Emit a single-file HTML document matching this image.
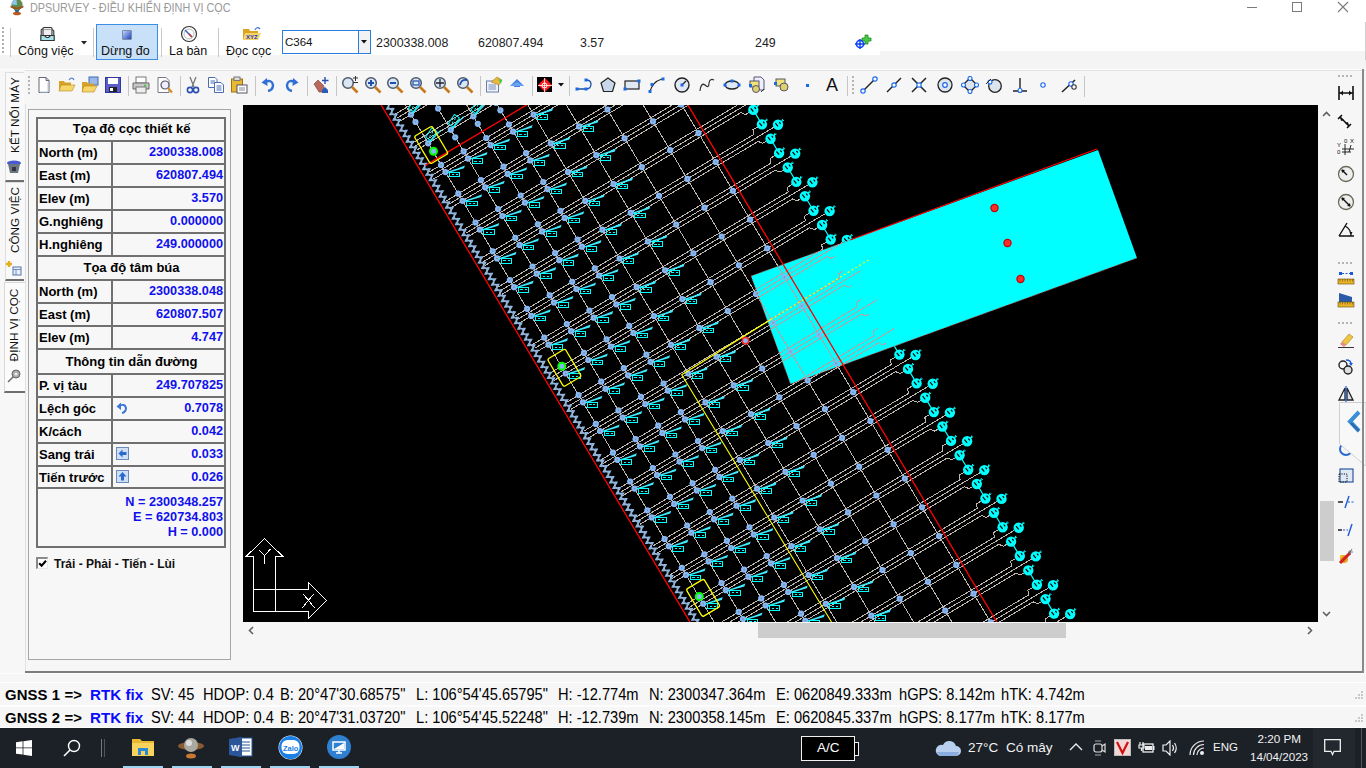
<!DOCTYPE html>
<html><head><meta charset="utf-8">
<style>
html,body{margin:0;padding:0;width:1366px;height:768px;overflow:hidden;background:#f6f6f6;font-family:"Liberation Sans",sans-serif}
.a{position:absolute}
.t{position:absolute;white-space:nowrap}
.b{font-weight:bold}
.sep{position:absolute;width:1px;background:#c9c9c9}
.tb{position:absolute;left:36px;width:190px;border-collapse:collapse}
.cell{position:absolute;box-sizing:border-box}
.lbl{position:absolute;left:39px;font-weight:bold;font-size:13px;color:#000;white-space:nowrap}
.val{position:absolute;right:1143px;font-weight:bold;font-size:12.7px;color:#1010ee;white-space:nowrap;text-align:right}
.hd{position:absolute;left:37px;width:189px;text-align:center;font-weight:bold;font-size:13px;color:#000;white-space:nowrap}
.hl{position:absolute;left:36px;width:190px;background:#666}
.gn{position:absolute;font-size:15px;color:#000;white-space:nowrap}
</style></head><body>
<!-- TITLE BAR -->
<div class="a" style="left:0;top:0;width:1366px;height:22px;background:#fff"></div>
<svg class="a" style="left:9px;top:0" width="16" height="16" viewBox="0 0 16 16">
<ellipse cx="8" cy="13.5" rx="4" ry="1.8" fill="#c05818"/><path d="M4.5 8 L11.5 8 L9.2 12.5 L6.8 12.5Z" fill="#3a5e86"/>
<circle cx="8" cy="4.6" r="5.6" fill="#5e8c4e"/><path d="M2.6 4.6 A5.4 5.4 0 0 1 7.5 -0.8 L8 5 Z" fill="#8cc4f0"/>
<path d="M1.6 5.6 Q8 9.6 14.4 5.6 L14.4 7.4 Q8 10.6 1.6 7.4Z" fill="#a04e1a"/></svg>
<div class="t" style="left:29.5px;top:0px;font-size:13px;line-height:15px;color:#9a9a9a;transform:scaleX(0.833);transform-origin:0 0">DPSURVEY - ĐIỀU KHIỂN ĐỊNH VỊ CỌC</div>
<div class="a" style="left:1247px;top:7px;width:10px;height:1px;background:#7a7a7a"></div>
<div class="a" style="left:1292px;top:2px;width:8px;height:8px;border:1px solid #7a7a7a"></div>
<svg class="a" style="left:1337px;top:1px" width="12" height="12"><path d="M1 1L11 11M11 1L1 11" stroke="#7a7a7a" stroke-width="1.1"/></svg>

<!-- RIBBON ROW 1 -->
<div class="a" style="left:0;top:22px;width:1366px;height:29px;background:#fff"></div><div class="a" style="left:0;top:51px;width:1366px;height:18px;background:#f4f4f4"></div><div class="a" style="left:0;top:51px;width:880px;height:4px;background:#fff"></div>
<div class="a" style="left:0;top:69px;width:1366px;height:1px;background:#fdfdfd"></div><div class="a" style="left:0;top:70px;width:1366px;height:1px;background:#e2e2e2"></div>
<div class="a" style="left:2px;top:27px;width:2px;height:28px;background:repeating-linear-gradient(#b0b0b0 0 2px,transparent 2px 4px)"></div>
<div class="sep" style="left:10px;top:28px;height:29px"></div>
<!-- Cong viec -->
<svg class="a" style="left:40px;top:26px" width="15" height="16" viewBox="0 0 15 16">
<path d="M1.2 9 V4 Q1.2 3 2.2 3 H3 M13.8 9 V5 Q13.8 4 12.8 4 H12" fill="none" stroke="#333" stroke-width="1.1"/>
<rect x="3" y="1.5" width="9" height="8" rx="1" fill="#f0eef4" stroke="#333" stroke-width="1.1"/><path d="M3.5 3.5 H11.5" stroke="#888" stroke-width="0.8"/>
<path d="M0.8 9.5 H4.5 L6.5 11.5 H8.5 L10.5 9.5 H14.2 V14.5 H0.8Z" fill="#a6e2ea" stroke="#333" stroke-width="1.2"/></svg>
<div class="t" style="left:18px;top:43.5px;font-size:12.5px;color:#111">Công việc</div>
<svg class="a" style="left:80.5px;top:40.5px" width="7" height="4"><path d="M0 0H6L3 3.5Z" fill="#222"/></svg>
<div class="sep" style="left:93px;top:28px;height:29px"></div>
<!-- Dung do -->
<div class="a" style="left:96px;top:24px;width:60px;height:34px;background:#c8e0f8;border:1px solid #3a8ee6"></div>
<div class="a" style="left:122.5px;top:30.5px;width:8px;height:8px;background:linear-gradient(135deg,#bcd4ff,#2244bb);box-shadow:0 0 0 0.5px #335"></div>
<div class="t" style="left:101px;top:43.5px;font-size:12.5px;color:#111">Dừng đo</div>
<div class="sep" style="left:161px;top:28px;height:29px"></div>
<!-- La ban -->
<svg class="a" style="left:180px;top:25px" width="18" height="18" viewBox="0 0 18 18">
<circle cx="9" cy="9" r="7.5" fill="#fff" stroke="#333" stroke-width="1.2"/><circle cx="9" cy="9" r="5" fill="none" stroke="#bbb"/>
<path d="M5 5 L12 12" stroke="#3366cc" stroke-width="1.5"/><path d="M9 9 L12 12" stroke="#dd3333" stroke-width="1.5"/></svg>
<div class="t" style="left:169px;top:43.5px;font-size:12.5px;color:#111">La bàn</div>
<div class="sep" style="left:218px;top:28px;height:29px"></div>
<!-- Doc coc -->
<svg class="a" style="left:242px;top:26px" width="20" height="15" viewBox="0 0 20 15">
<path d="M1 3 H7 L8 5 H16 V14 H1 Z" fill="#d9a520"/><path d="M3 7 H19 L16 14 H1 Z" fill="#f5d46a"/>
<text x="4" y="13" font-size="6" font-weight="bold" fill="#2233cc" font-family="Liberation Sans">XYZ</text>
<path d="M13 4 Q15 0 18 3" fill="none" stroke="#3a6fd0" stroke-width="1.2"/></svg>
<div class="t" style="left:226px;top:43.5px;font-size:12.5px;color:#111">Đọc cọc</div>
<!-- combo -->
<div class="a" style="left:282px;top:30px;width:87px;height:22px;background:#fff;border:1px solid #2a7ee0"></div>
<div class="a" style="left:358px;top:31px;width:11px;height:22px;background:#f2f2f2;border-left:1px solid #2a7ee0"></div>
<svg class="a" style="left:361px;top:40px" width="7" height="4"><path d="M0 0H6L3 3.5Z" fill="#111"/></svg>
<div class="t" style="left:285px;top:35.5px;font-size:11.5px;color:#111">C364</div>
<div class="t" style="left:376px;top:36px;font-size:12.4px;color:#222">2300338.008</div>
<div class="t" style="left:478px;top:36px;font-size:12.4px;color:#222">620807.494</div>
<div class="t" style="left:580px;top:36px;font-size:12.4px;color:#222">3.57</div>
<div class="t" style="left:755px;top:36px;font-size:12.4px;color:#222">249</div>
<svg class="a" style="left:854px;top:34px" width="18" height="16" viewBox="0 0 18 16">
<path d="M11 1 H14 V4 H17 V7 H14 V10 H11 V7 H8 V4 H11 Z" fill="#4c4" stroke="#282" stroke-width="0.8"/>
<circle cx="6" cy="10" r="3.6" fill="none" stroke="#1144ee" stroke-width="1.6"/><circle cx="6" cy="10" r="1.2" fill="#1144ee"/>
<path d="M6 5 V15 M1 10 H11" stroke="#1144ee" stroke-width="1.3"/></svg>

<!-- TOOLBAR ROW 2 -->
<div class="a" style="left:0;top:71px;width:1366px;height:34px;background:#f6f6f6"></div>
<div class="a" style="left:28px;top:76px;width:2px;height:19px;background:repeating-linear-gradient(#b4b4b4 0 2px,transparent 2px 4px)"></div>
<svg class="a" style="left:34.7px;top:76.0px" width="18" height="18" viewBox="0 0 18 18"><path d="M4 1.5H11L14 4.5V16.5H4Z" fill="#fff" stroke="#667"/><path d="M11 1.5V4.5H14" fill="none" stroke="#667"/><path d="M5 16 H13 V6" stroke="#b8c8e0" fill="none"/></svg>
<svg class="a" style="left:57.7px;top:76.0px" width="18" height="18" viewBox="0 0 18 18"><path d="M1 5H6L7 6.5H13V15H1Z" fill="#d6a228"/><path d="M3 9H17L14 15H1Z" fill="#f6d66a" stroke="#b98a20" stroke-width="0.6"/><path d="M11 4 Q14 0 16 4" fill="none" stroke="#4a78c8" stroke-width="1.2"/></svg>
<svg class="a" style="left:81.0px;top:76.0px" width="18" height="18" viewBox="0 0 18 18"><rect x="8" y="1" width="9" height="8" fill="#9ab8e8" stroke="#4468b0"/><path d="M1 6H6L7 7.5H13V16H1Z" fill="#d6a228"/><path d="M3 10H16L13 16H1Z" fill="#f6d66a" stroke="#b98a20" stroke-width="0.6"/></svg>
<svg class="a" style="left:103.8px;top:76.0px" width="18" height="18" viewBox="0 0 18 18"><rect x="1.5" y="1.5" width="15" height="15" fill="#5a5ec8" stroke="#33379a"/><rect x="4" y="2" width="10" height="6" fill="#fff"/><rect x="5" y="11" width="8" height="5" fill="#222"/><rect x="6" y="12" width="3" height="3" fill="#fff"/></svg>
<div class="a" style="left:128px;top:76px;width:1px;height:20px;background:#c6c6c6"></div>
<svg class="a" style="left:132.4px;top:76.0px" width="18" height="18" viewBox="0 0 18 18"><rect x="4" y="1" width="10" height="6" fill="#fff" stroke="#777"/><path d="M1 7H17V13H1Z" fill="#c8c8c8" stroke="#666"/><rect x="4" y="11" width="10" height="6" fill="#eee" stroke="#777"/><circle cx="13" cy="9.5" r="1" fill="#2c2"/></svg>
<svg class="a" style="left:156.0px;top:76.0px" width="18" height="18" viewBox="0 0 18 18"><path d="M2 1.5H10L13 4.5V16.5H2Z" fill="#fff" stroke="#778"/><circle cx="9" cy="9" r="4" fill="#eef" stroke="#556" stroke-width="1.2"/><path d="M12 12L16 16.5" stroke="#d98a20" stroke-width="2"/></svg>
<div class="a" style="left:180px;top:76px;width:1px;height:20px;background:#c6c6c6"></div>
<svg class="a" style="left:184.0px;top:76.0px" width="18" height="18" viewBox="0 0 18 18"><path d="M6 1L10 11M12 1L8 11" stroke="#777" stroke-width="1.3"/><circle cx="6" cy="14" r="2.6" fill="none" stroke="#2a50b0" stroke-width="1.6"/><circle cx="12" cy="14" r="2.6" fill="none" stroke="#2a50b0" stroke-width="1.6"/></svg>
<svg class="a" style="left:206.9px;top:76.0px" width="18" height="18" viewBox="0 0 18 18"><path d="M1.5 1.5H8L10 3.5V11.5H1.5Z" fill="#fff" stroke="#4a6cb0"/><path d="M7.5 6.5H14L16.5 9V16.5H7.5Z" fill="#fff" stroke="#4a6cb0"/><path d="M9.5 10H14.5M9.5 12H14.5M9.5 14H14.5M3.5 5H8M3.5 7H8" stroke="#4a6cb0"/></svg>
<svg class="a" style="left:230.3px;top:76.0px" width="18" height="18" viewBox="0 0 18 18"><rect x="1.5" y="3" width="11" height="13" fill="#e8b830" stroke="#a07010"/><rect x="4" y="1" width="6" height="3.5" fill="#ddd" stroke="#777"/><rect x="7" y="9" width="10" height="8" fill="#fff" stroke="#556"/><path d="M9 12H15M9 14H15" stroke="#889"/></svg>
<div class="a" style="left:255px;top:76px;width:1px;height:20px;background:#c6c6c6"></div>
<svg class="a" style="left:259.6px;top:76.0px" width="18" height="18" viewBox="0 0 18 18"><path d="M5 6 Q12 3 13 9 Q13 14 8 15" fill="none" stroke="#2f6fd6" stroke-width="2.4"/><path d="M1.5 6.5 L7 2 L7.5 10Z" fill="#2f6fd6"/></svg>
<svg class="a" style="left:282.3px;top:76.0px" width="18" height="18" viewBox="0 0 18 18"><path d="M13 6 Q6 3 5 9 Q5 14 10 15" fill="none" stroke="#2f6fd6" stroke-width="2.4"/><path d="M16.5 6.5 L11 2 L10.5 10Z" fill="#2f6fd6"/></svg>
<div class="a" style="left:307px;top:76px;width:1px;height:20px;background:#c6c6c6"></div>
<svg class="a" style="left:312.2px;top:76.0px" width="18" height="18" viewBox="0 0 18 18"><path d="M2 8 L6 4 L12 10 L11 16 H7Z" fill="#b86a5a" stroke="#7a3a30" stroke-width="0.6"/><path d="M13 1V8M10 4.5H16.5" stroke="#2a4fb0" stroke-width="1.4"/><path d="M10 14 L13 11 L16 14 V17 H10Z" fill="#2a5cb8"/></svg>
<div class="a" style="left:336px;top:76px;width:1px;height:20px;background:#c6c6c6"></div>
<svg class="a" style="left:340.5px;top:76.0px" width="18" height="18" viewBox="0 0 18 18"><circle cx="7" cy="7" r="5.3" fill="#dbe6f5" stroke="#4d5a6a" stroke-width="1.5"/><path d="M11 11L16.5 16.5" stroke="#c9781c" stroke-width="2.6"/><path d="M12 2H17M14.5 0V5M12 6.5H17" stroke="#333" stroke-width="1"/></svg>
<svg class="a" style="left:363.5px;top:76.0px" width="18" height="18" viewBox="0 0 18 18"><circle cx="7" cy="7" r="5.3" fill="#dbe6f5" stroke="#4d5a6a" stroke-width="1.5"/><path d="M11 11L16.5 16.5" stroke="#c9781c" stroke-width="2.6"/><path d="M4 7H10M7 4V10" stroke="#1c4fb0" stroke-width="2"/></svg>
<svg class="a" style="left:386.4px;top:76.0px" width="18" height="18" viewBox="0 0 18 18"><circle cx="7" cy="7" r="5.3" fill="#dbe6f5" stroke="#4d5a6a" stroke-width="1.5"/><path d="M11 11L16.5 16.5" stroke="#c9781c" stroke-width="2.6"/><path d="M4 7H10" stroke="#1c4fb0" stroke-width="2"/></svg>
<svg class="a" style="left:409.1px;top:76.0px" width="18" height="18" viewBox="0 0 18 18"><circle cx="7" cy="7" r="5.3" fill="#dbe6f5" stroke="#4d5a6a" stroke-width="1.5"/><path d="M11 11L16.5 16.5" stroke="#c9781c" stroke-width="2.6"/><rect x="4" y="5" width="6" height="4" fill="none" stroke="#1c4fb0" stroke-width="1.2"/></svg>
<svg class="a" style="left:432.6px;top:76.0px" width="18" height="18" viewBox="0 0 18 18"><circle cx="7" cy="7" r="5.3" fill="#dbe6f5" stroke="#4d5a6a" stroke-width="1.5"/><path d="M11 11L16.5 16.5" stroke="#c9781c" stroke-width="2.6"/><path d="M7 3V11M3 7H11" stroke="#223" stroke-width="1.3"/></svg>
<svg class="a" style="left:456.0px;top:76.0px" width="18" height="18" viewBox="0 0 18 18"><circle cx="7" cy="7" r="5.3" fill="#dbe6f5" stroke="#4d5a6a" stroke-width="1.5"/><path d="M11 11L16.5 16.5" stroke="#c9781c" stroke-width="2.6"/><path d="M4 9 Q5 3 11 4" fill="none" stroke="#1c4fb0" stroke-width="1.8"/></svg>
<div class="a" style="left:480px;top:76px;width:1px;height:20px;background:#c6c6c6"></div>
<svg class="a" style="left:485.2px;top:76.0px" width="18" height="18" viewBox="0 0 18 18"><rect x="1.5" y="5" width="12" height="11" fill="#eef2fa" stroke="#6a7fa8"/><path d="M3.5 9H11M3.5 11H11M3.5 13H11" stroke="#7a8fb8"/><path d="M6 6 L12 1 L17 4 L14 9Z" fill="#e6b840" stroke="#9a7010" stroke-width="0.5"/><path d="M13 3 L17 4 L16 8Z" fill="#4c4"/></svg>
<svg class="a" style="left:507.5px;top:76.0px" width="18" height="18" viewBox="0 0 18 18"><path d="M9 3 L16 10 H12 V11 H6 V10 H2Z" fill="#3e7fe0"/><path d="M2 10 H16 L9 6Z" fill="#6aa4f0"/></svg>
<div class="a" style="left:532px;top:76px;width:1px;height:20px;background:#c6c6c6"></div>
<div class="a" style="left:537px;top:77px;width:15px;height:15px;background:#000"></div>
<svg class="a" style="left:536.6px;top:76.5px" width="16" height="16" viewBox="0 0 16 16"><path d="M8 1 L15 8 L8 15 L1 8Z" fill="#ff1a1a"/><circle cx="7.5" cy="8.5" r="2.5" fill="none" stroke="#fff" stroke-width="1"/><path d="M1 8.5H15M7.5 1V15" stroke="#fff" stroke-width="0.8"/></svg>
<svg class="a" style="left:558px;top:83px" width="7" height="4"><path d="M0 0H6L3 3.5Z" fill="#111"/></svg>
<div class="a" style="left:569px;top:76px;width:1px;height:20px;background:#c6c6c6"></div>
<svg class="a" style="left:575.0px;top:76.0px" width="18" height="18" viewBox="0 0 18 18"><path d="M2 13 H11 Q16 13 16 8 Q16 4 11 4" fill="none" stroke="#1a4fa8" stroke-width="1.3"/><rect x="0.5" y="11.5" width="3" height="3" fill="#1a6ae8"/><rect x="9.5" y="11.5" width="3" height="3" fill="#1a6ae8"/><rect x="9.5" y="2.5" width="3" height="3" fill="#1a6ae8"/></svg>
<svg class="a" style="left:598.8px;top:76.0px" width="18" height="18" viewBox="0 0 18 18"><path d="M9 2 L16 7 L13.5 15.5 H4.5 L2 7Z" fill="#c8d8ea" stroke="#222" stroke-width="1.2"/></svg>
<svg class="a" style="left:623.0px;top:76.0px" width="18" height="18" viewBox="0 0 18 18"><rect x="2" y="5" width="14" height="8" fill="#e0e8f4" stroke="#222" stroke-width="1.2"/><rect x="0.5" y="11.5" width="3" height="3" fill="#1a6ae8"/><rect x="14.5" y="3.5" width="3" height="3" fill="#1a6ae8"/></svg>
<svg class="a" style="left:647.9px;top:76.0px" width="18" height="18" viewBox="0 0 18 18"><path d="M2 16 Q4 6 14 3" fill="none" stroke="#222" stroke-width="1.3"/><rect x="0.5" y="14" width="3" height="3" fill="#1a6ae8"/><rect x="2.5" y="7" width="3" height="3" fill="#1a6ae8"/><rect x="13.5" y="1.5" width="3" height="3" fill="#1a6ae8"/></svg>
<svg class="a" style="left:673.2px;top:76.0px" width="18" height="18" viewBox="0 0 18 18"><circle cx="9" cy="9" r="7" fill="#e0e8f4" stroke="#222" stroke-width="1.4"/><path d="M9 9 L13 5" stroke="#222" stroke-width="1.2"/><rect x="7.5" y="7.5" width="3" height="3" fill="#1a6ae8"/></svg>
<svg class="a" style="left:697.7px;top:76.0px" width="18" height="18" viewBox="0 0 18 18"><path d="M2 15 Q3 6 7 9 Q11 13 11 7 Q12 2 16 4" fill="none" stroke="#333" stroke-width="1.2"/></svg>
<svg class="a" style="left:723.0px;top:76.0px" width="18" height="18" viewBox="0 0 18 18"><ellipse cx="9" cy="9" rx="7" ry="4" fill="#e0e8f4" stroke="#222" stroke-width="1.3"/><rect x="7.5" y="3.5" width="3" height="3" fill="#1a6ae8"/><rect x="0.5" y="7.5" width="3" height="3" fill="#1a6ae8"/><rect x="14.5" y="7.5" width="3" height="3" fill="#1a6ae8"/></svg>
<svg class="a" style="left:748.0px;top:76.0px" width="18" height="18" viewBox="0 0 18 18"><path d="M6 1H13L16 4V14H6Z" fill="#eef" stroke="#557"/><rect x="2" y="5" width="9" height="6" fill="#f2e27a" stroke="#556"/><circle cx="8" cy="13" r="3.5" fill="#dfd070" stroke="#556"/><rect x="1" y="8" width="3" height="3" fill="#1a6ae8"/><path d="M13 16L16 13" stroke="#333"/></svg>
<svg class="a" style="left:772.7px;top:76.0px" width="18" height="18" viewBox="0 0 18 18"><rect x="3" y="3" width="9" height="7" fill="#f2e27a" stroke="#556"/><circle cx="11" cy="11" r="4" fill="#dfd070" stroke="#556"/><rect x="1" y="6" width="3" height="3" fill="#1a6ae8"/></svg>
<div class="a" style="left:805.5px;top:83.5px;width:3px;height:3px;background:#1a6ae8"></div>
<div class="t" style="left:826px;top:75px;font-size:18px;color:#111">A</div>
<div class="a" style="left:847px;top:76px;width:1px;height:20px;background:#c6c6c6"></div>
<div class="a" style="left:852px;top:76px;width:2px;height:19px;background:repeating-linear-gradient(#b4b4b4 0 2px,transparent 2px 4px)"></div>
<svg class="a" style="left:860.0px;top:76.0px" width="18" height="18" viewBox="0 0 18 18"><path d="M3 15 L15 3" stroke="#222" stroke-width="1.4"/><circle cx="3" cy="15" r="2.2" fill="#fff" stroke="#1a6ae8" stroke-width="1.2"/><circle cx="15" cy="3" r="2.2" fill="#fff" stroke="#1a6ae8" stroke-width="1.2"/></svg>
<svg class="a" style="left:885.0px;top:76.0px" width="18" height="18" viewBox="0 0 18 18"><path d="M2 16 L16 2" stroke="#222" stroke-width="1.4"/><circle cx="9" cy="9" r="2.2" fill="#fff" stroke="#1a6ae8" stroke-width="1.2"/></svg>
<svg class="a" style="left:910.0px;top:76.0px" width="18" height="18" viewBox="0 0 18 18"><path d="M2 2 L16 16 M16 2 L2 16" stroke="#222" stroke-width="1.5"/><rect x="7" y="7" width="4" height="4" fill="#fff" stroke="#1a6ae8" stroke-width="1.2"/></svg>
<svg class="a" style="left:935.5px;top:76.0px" width="18" height="18" viewBox="0 0 18 18"><circle cx="9" cy="9" r="7" fill="#dde4ee" stroke="#222" stroke-width="1.3"/><circle cx="9" cy="9" r="2.3" fill="#fff" stroke="#1a6ae8" stroke-width="1.2"/></svg>
<svg class="a" style="left:960.5px;top:76.0px" width="18" height="18" viewBox="0 0 18 18"><path d="M9 2 L16 9 L9 16 L2 9Z" fill="#dde4ee" stroke="#222" stroke-width="1.3"/><g fill="#fff" stroke="#1a6ae8" stroke-width="1.1"><circle cx="9" cy="2.5" r="2"/><circle cx="15.5" cy="9" r="2"/><circle cx="9" cy="15.5" r="2"/><circle cx="2.5" cy="9" r="2"/></g></svg>
<svg class="a" style="left:985.4px;top:76.0px" width="18" height="18" viewBox="0 0 18 18"><circle cx="10" cy="10" r="6.3" fill="#dde4ee" stroke="#222" stroke-width="1.3"/><circle cx="5" cy="6" r="2" fill="#fff" stroke="#1a6ae8" stroke-width="1.1"/><path d="M1 8 L6 3" stroke="#222"/></svg>
<svg class="a" style="left:1010.6px;top:76.0px" width="18" height="18" viewBox="0 0 18 18"><path d="M9 2V15M2 15H16" stroke="#222" stroke-width="1.4"/><circle cx="9" cy="14.5" r="2" fill="#fff" stroke="#1a6ae8" stroke-width="1.1"/></svg>
<svg class="a" style="left:1034.3px;top:76.0px" width="18" height="18" viewBox="0 0 18 18"><circle cx="9" cy="9" r="2.2" fill="#fff" stroke="#1a6ae8" stroke-width="1.1"/></svg>
<svg class="a" style="left:1060.4px;top:76.0px" width="18" height="18" viewBox="0 0 18 18"><path d="M2 16 L15 4" stroke="#222" stroke-width="1.5"/><circle cx="11" cy="8" r="2.2" fill="#fff" stroke="#1a6ae8" stroke-width="1.1"/><circle cx="14" cy="11" r="2.2" fill="#fff" stroke="#333" stroke-width="1.1"/></svg>
<div class="a" style="left:1084px;top:76px;width:1px;height:21px;background:#c6c6c6"></div>

<!-- LEFT TABS -->
<div class="a" style="left:0;top:70px;width:25px;height:602px;background:#f7f7f7"></div>
<div class="a" style="left:5px;top:72px;width:18px;height:107px;background:#f9f9f9;border:1px solid #dedede;border-right:none;border-bottom:2px solid #6e6e6e"></div>
<div class="t" style="left:14.5px;top:115px;transform:translate(-50%,-50%) rotate(-90deg);font-size:11.8px;color:#111">KẾT NỐI MÁY</div>
<svg class="a" style="left:6px;top:159px" width="16" height="16"><ellipse cx="8" cy="4" rx="7" ry="2.5" fill="#4a5ad0"/><path d="M2 5 H14 L12 14 H4Z" fill="#6a7680"/><rect x="6" y="8" width="4" height="4" fill="#334"/></svg>
<div class="a" style="left:5px;top:182px;width:18px;height:96px;background:#f9f9f9;border:1px solid #dedede;border-right:none;border-bottom:2px solid #6e6e6e"></div>
<div class="t" style="left:14.5px;top:219.5px;transform:translate(-50%,-50%) rotate(-90deg);font-size:11.8px;color:#111">CÔNG VIỆC</div>
<svg class="a" style="left:6px;top:260px" width="16" height="16"><rect x="7" y="7" width="8" height="8" fill="#e8f0ff" stroke="#5577aa"/><path d="M7 9.5H15M10 9.5V15" stroke="#5577aa" stroke-width="0.8"/><path d="M3 1V7M0 4H6" stroke="#e0b020" stroke-width="2.4"/></svg>
<div class="a" style="left:4px;top:282px;width:21px;height:108px;background:#fbfbfb;border:1px solid #d8d8d8;border-right:none;border-bottom:2px solid #6e6e6e"></div>
<div class="t" style="left:14px;top:325px;transform:translate(-50%,-50%) rotate(-90deg);font-size:11.8px;color:#111">ĐỊNH VỊ CỌC</div>
<svg class="a" style="left:6px;top:368px" width="16" height="16"><circle cx="10" cy="6" r="4" fill="#aaa" stroke="#666"/><path d="M7 9 L2 14" stroke="#666" stroke-width="1.5"/><circle cx="10" cy="6" r="1.5" fill="#eee"/></svg>

<!-- PANEL -->
<div class="a" style="left:25px;top:104px;width:1px;height:568px;background:#e2e2e2"></div>
<div class="a" style="left:28px;top:109px;width:203px;height:551px;border:1px solid #a6a6a6;box-sizing:border-box;background:#f7f7f7"></div>
<div class="a" style="left:36px;top:117px;width:190px;height:431px;border:2px solid #707070;box-sizing:border-box"></div>
<div class="a" style="left:36px;top:140px;width:190px;height:2px;background:#707070"></div>
<div class="a" style="left:36px;top:163px;width:190px;height:2px;background:#707070"></div>
<div class="a" style="left:36px;top:186px;width:190px;height:2px;background:#707070"></div>
<div class="a" style="left:36px;top:209px;width:190px;height:2px;background:#707070"></div>
<div class="a" style="left:36px;top:232px;width:190px;height:2px;background:#707070"></div>
<div class="a" style="left:36px;top:255px;width:190px;height:2px;background:#707070"></div>
<div class="a" style="left:36px;top:279px;width:190px;height:2px;background:#707070"></div>
<div class="a" style="left:36px;top:302px;width:190px;height:2px;background:#707070"></div>
<div class="a" style="left:36px;top:325px;width:190px;height:2px;background:#707070"></div>
<div class="a" style="left:36px;top:348px;width:190px;height:2px;background:#707070"></div>
<div class="a" style="left:36px;top:373px;width:190px;height:2px;background:#707070"></div>
<div class="a" style="left:36px;top:396px;width:190px;height:2px;background:#707070"></div>
<div class="a" style="left:36px;top:419px;width:190px;height:2px;background:#707070"></div>
<div class="a" style="left:36px;top:442px;width:190px;height:2px;background:#707070"></div>
<div class="a" style="left:36px;top:465px;width:190px;height:2px;background:#707070"></div>
<div class="a" style="left:36px;top:487px;width:190px;height:2px;background:#707070"></div>
<div class="a" style="left:111px;top:140px;width:2px;height:116px;background:#707070"></div>
<div class="a" style="left:111px;top:279px;width:2px;height:70px;background:#707070"></div>
<div class="a" style="left:111px;top:373px;width:2px;height:116px;background:#707070"></div>
<div class="hd" style="top:118px;height:22px;line-height:22px">Tọa độ cọc thiết kế</div>
<div class="hd" style="top:256px;height:23px;line-height:23px">Tọa độ tâm búa</div>
<div class="hd" style="top:350px;height:23px;line-height:23px">Thông tin dẫn đường</div>
<div class="lbl" style="top:141px;height:22px;line-height:23px">North (m)</div>
<div class="val" style="top:141px;height:22px;line-height:23px;right:1143px">2300338.008</div>
<div class="lbl" style="top:164px;height:22px;line-height:23px">East (m)</div>
<div class="val" style="top:164px;height:22px;line-height:23px;right:1143px">620807.494</div>
<div class="lbl" style="top:187px;height:22px;line-height:23px">Elev (m)</div>
<div class="val" style="top:187px;height:22px;line-height:23px;right:1143px">3.570</div>
<div class="lbl" style="top:210px;height:22px;line-height:23px">G.nghiêng</div>
<div class="val" style="top:210px;height:22px;line-height:23px;right:1143px">0.000000</div>
<div class="lbl" style="top:233px;height:22px;line-height:23px">H.nghiêng</div>
<div class="val" style="top:233px;height:22px;line-height:23px;right:1143px">249.000000</div>
<div class="lbl" style="top:280px;height:22px;line-height:23px">North (m)</div>
<div class="val" style="top:280px;height:22px;line-height:23px;right:1143px">2300338.048</div>
<div class="lbl" style="top:303px;height:22px;line-height:23px">East (m)</div>
<div class="val" style="top:303px;height:22px;line-height:23px;right:1143px">620807.507</div>
<div class="lbl" style="top:326px;height:22px;line-height:23px">Elev (m)</div>
<div class="val" style="top:326px;height:22px;line-height:23px;right:1143px">4.747</div>
<div class="lbl" style="top:374px;height:22px;line-height:23px">P. vị tàu</div>
<div class="val" style="top:374px;height:22px;line-height:23px;right:1143px">249.707825</div>
<div class="lbl" style="top:397px;height:22px;line-height:23px">Lệch góc</div>
<div class="val" style="top:397px;height:22px;line-height:23px;right:1143px">0.7078</div>
<div class="lbl" style="top:420px;height:22px;line-height:23px">K/cách</div>
<div class="val" style="top:420px;height:22px;line-height:23px;right:1143px">0.042</div>
<div class="lbl" style="top:443px;height:22px;line-height:23px">Sang trái</div>
<div class="val" style="top:443px;height:22px;line-height:23px;right:1143px">0.033</div>
<div class="lbl" style="top:466px;height:22px;line-height:23px">Tiến trước</div>
<div class="val" style="top:466px;height:22px;line-height:23px;right:1143px">0.026</div>
<svg class="a" style="left:116px;top:402px" width="13" height="12"><path d="M3 4 Q9 1 10 6 Q10 10 6 11" fill="none" stroke="#3a78d8" stroke-width="2"/><path d="M0.5 4.5 L5 0.5 L5 8Z" fill="#3a78d8"/></svg>
<svg class="a" style="left:116px;top:447px" width="13" height="13"><rect x="0.5" y="0.5" width="12" height="12" fill="#cfe0f5" stroke="#6a8ab8"/><path d="M2.5 6.5 L6.5 2.5 V5 H10.5 V8 H6.5 V10.5Z" fill="#2a6ad0"/></svg>
<svg class="a" style="left:116px;top:470px" width="13" height="13"><rect x="0.5" y="0.5" width="12" height="12" fill="#cfe0f5" stroke="#6a8ab8"/><path d="M6.5 2 L10.5 6.5 H8 V10.5 H5 V6.5 H2.5Z" fill="#2a6ad0"/></svg>
<div class="val" style="top:495px;line-height:15px;right:1143px">N = 2300348.257</div>
<div class="val" style="top:510px;line-height:15px;right:1143px">E = 620734.803</div>
<div class="val" style="top:525px;line-height:15px;right:1143px">H = 0.000</div>
<div class="a" style="left:36px;top:557px;width:12px;height:12px;border-top:2px solid #8a8a8a;border-left:2px solid #8a8a8a;border-right:1px solid #e8e8e8;border-bottom:1px solid #e8e8e8;box-sizing:border-box;background:#fff"></div>
<svg class="a" style="left:38px;top:559px" width="9" height="9"><path d="M1.2 4.2 L3.6 6.8 L8 1.8" fill="none" stroke="#000" stroke-width="2.1"/></svg>
<div class="t b" style="left:54px;top:557px;font-size:12px;color:#111">Trái - Phải - Tiến - Lùi</div>

<!-- CANVAS -->
<svg class="a" style="left:243px;top:105px" width="1075" height="517" viewBox="243 105 1075 517">
<defs><clipPath id="cy"><path d="M751 276 L1098 150 L1137 258 L790.5 384 Z"/></clipPath>
<g id="fish"><circle r="5.2" fill="#00ffff"/><path d="M-2.6 -1.6 L0 1.6 M1.2 -2.8 L2.6 -1" stroke="#000" stroke-width="1.2"/><path d="M3 -3.2 L6 -4.6 M3.5 -2.6 L4.6 -5.8" stroke="#00ffff" stroke-width="1"/></g>
<g id="dot"><circle r="3.1" fill="#84b8f8"/><circle r="0.8" fill="#8a8a80"/></g>
<g id="lab"><path d="M2 -0.3 L12 -3.6 L19.5 -6.6 L18.6 -3.8 L2.5 0.9Z" fill="#40ecff"/><path d="M4.2 0.2 h10.2 v4.6 h-10.2z M6.4 2.5 h2.2 M10.5 2.5 h2" fill="none" stroke="#00ffff" stroke-width="1" shape-rendering="crispEdges"/></g>
<g id="lab2"><path d="M1 -1 L12.8 -13.2" stroke="#40ecff" stroke-width="1.3"/><g transform="translate(3 -9) rotate(-56)"><path d="M-5.5 -3 h11 v6 h-11z M-3 0 h2 M1 0 h2" fill="none" stroke="#00ffff" stroke-width="1"/></g></g>
<path id="gp" d="M544.8 -124.2L1057.6 734.4M516.4 -107.2L1029.2 751.3M488.1 -90.3L1000.9 768.2M459.8 -73.4L972.6 785.1M431.4 -56.5L944.2 802M408.9 -43L921.7 815.5M386.3 -29.5L899.1 829M363.7 -16L876.5 842.5M341.1 -2.5L853.9 856M309 -29.4L558.8 -178.7M311.1 -25.8L560.9 -175.1M313.2 -22.3L563.1 -171.5M326.2 -0.7L576 -149.9M328.3 2.9L578.1 -146.3M330.4 6.5L580.2 -142.8M343.3 28.1L593.2 -121.1M345.5 31.7L595.3 -117.5M347.6 35.2L597.4 -114M360.5 56.9L610.4 -92.3M362.7 60.5L612.5 -88.7M364.8 64L614.6 -85.2M377.7 85.7L627.6 -63.6M379.9 89.3L629.7 -59.9M382 92.8L631.8 -56.4M394.9 114.4L644.7 -34.8M397.1 118.1L646.9 -31.2M399.2 121.6L649 -27.7M412.1 143.2L661.9 -6M414.3 146.8L664.1 -2.4M416.4 150.3L666.2 1.1M429.3 172L679.1 22.8M431.4 175.6L681.3 26.4M433.5 179.1L683.4 29.9M446.5 200.8L696.3 51.6M448.6 204.4L698.5 55.2M450.7 207.9L700.6 58.7M463.7 229.6L713.5 80.3M465.8 233.2L715.6 83.9M467.9 236.7L717.8 87.5M480.9 258.3L730.7 109.1M483 261.9L732.8 112.7M485.1 265.5L734.9 116.2M498 287.1L747.9 137.9M500.2 290.7L750 141.5M502.3 294.2L752.1 145M515.2 315.9L765.1 166.7M517.4 319.5L767.2 170.3M519.5 323L769.3 173.8M532.4 344.7L782.3 195.4M534.6 348.3L784.4 199M536.7 351.8L786.5 202.6M549.6 373.4L799.4 224.2M551.8 377L801.6 227.8M553.9 380.6L803.7 231.3M566.8 402.2L816.6 253M569 405.8L818.8 256.6M571.1 409.3L820.9 260.1M584 431L833.8 281.8M586.1 434.6L836 285.4M588.2 438.1L838.1 288.9M601.2 459.8L851 310.6M603.3 463.4L853.2 314.2M605.4 466.9L855.3 317.7M618.4 488.6L868.2 339.3M620.5 492.2L870.3 342.9M622.6 495.7L872.5 346.5M635.6 517.3L885.4 368.1M637.7 520.9L887.5 371.7M639.8 524.5L889.6 375.2M652.7 546.1L902.6 396.9M654.9 549.7L904.7 400.5M657 553.2L906.8 404M669.9 574.9L919.8 425.7M672.1 578.5L921.9 429.3M674.2 582L924 432.8M687.1 603.7L936.9 454.4M689.3 607.3L939.1 458M691.4 610.8L941.2 461.6M704.3 632.4L954.1 483.2M706.5 636L956.3 486.8M708.6 639.6L958.4 490.3M721.5 661.2L971.3 512M723.7 664.8L973.5 515.6M725.8 668.3L975.6 519.1M738.7 690L988.5 540.8M740.8 693.6L990.7 544.4M742.9 697.1L992.8 547.9M755.9 718.8L1005.7 569.5M758 722.4L1007.9 573.2M760.1 725.9L1010 576.7M773.1 747.5L1022.9 598.3M775.2 751.2L1025 601.9M777.3 754.7L1027.1 605.5M790.3 776.3L1040.1 627.1M792.4 779.9L1042.2 630.7M794.5 783.5L1044.3 634.2M807.4 805.1L1057.3 655.9M809.6 808.7L1059.4 659.5M811.7 812.2L1061.5 663M558.8 -178.7L564.8 -182.3L563.8 -186.8L568.6 -189.6M560.9 -175.1L584.6 -189.2M563.1 -171.5L569.1 -175.1L573.7 -173.2L577.1 -175.3M576 -149.9L582 -153.5L581 -158L585.7 -160.8M578.1 -146.3L601.7 -160.4M580.2 -142.8L586.3 -146.3L590.9 -144.5L594.3 -146.5M593.2 -121.1L599.2 -124.7L598.2 -129.2L602.9 -132.1M595.3 -117.5L618.9 -131.6M597.4 -114L603.4 -117.6L608.1 -115.7L611.5 -117.7M610.4 -92.3L616.4 -95.9L615.4 -100.5L620.1 -103.3M612.5 -88.7L636.1 -102.8M614.6 -85.2L620.6 -88.8L625.3 -86.9L628.7 -88.9M627.6 -63.6L633.6 -67.1L632.6 -71.7L637.3 -74.5M629.7 -59.9L653.3 -74M631.8 -56.4L637.8 -60L642.4 -58.1L645.9 -60.2M644.7 -34.8L650.7 -38.4L649.8 -42.9L654.5 -45.7M646.9 -31.2L670.5 -45.3M649 -27.7L655 -31.2L659.6 -29.3L663.1 -31.4M661.9 -6L667.9 -9.6L667 -14.1L671.7 -17M664.1 -2.4L687.7 -16.5M666.2 1.1L672.2 -2.5L676.8 -0.6L680.3 -2.6M679.1 22.8L685.1 19.2L684.2 14.6L688.9 11.8M681.3 26.4L704.9 12.3M683.4 29.9L689.4 26.3L694 28.2L697.4 26.2M696.3 51.6L702.3 48L701.3 43.4L706.1 40.6M698.5 55.2L722.1 41.1M700.6 58.7L706.6 55.1L711.2 57L714.6 54.9M713.5 80.3L719.5 76.7L718.5 72.2L723.3 69.4M715.6 83.9L739.3 69.8M717.8 87.5L723.8 83.9L728.4 85.8L731.8 83.7M730.7 109.1L736.7 105.5L735.7 101L740.4 98.2M732.8 112.7L756.4 98.6M734.9 116.2L740.9 112.6L745.6 114.5L749 112.5M747.9 137.9L753.9 134.3L752.9 129.8L757.6 126.9M750 141.5L773.6 127.4M752.1 145L758.1 141.4L762.8 143.3L766.2 141.3M765.1 166.7L771.1 163.1L770.1 158.5L774.8 155.7M767.2 170.3L790.8 156.2M769.3 173.8L775.3 170.2L780 172.1L783.4 170M782.3 195.4L788.3 191.9L787.3 187.3L792 184.5M784.4 199L808 184.9M786.5 202.6L792.5 199L797.1 200.9L800.6 198.8M799.4 224.2L805.4 220.6L804.5 216.1L809.2 213.3M801.6 227.8L825.2 213.7M803.7 231.3L809.7 227.8L814.3 229.7L817.8 227.6M816.6 253L822.6 249.4L821.7 244.9L826.4 242M818.8 256.6L842.4 242.5M820.9 260.1L826.9 256.5L831.5 258.4L835 256.4M833.8 281.8L839.8 278.2L838.9 273.6L843.6 270.8M836 285.4L859.6 271.3M838.1 288.9L844.1 285.3L848.7 287.2L852.1 285.2M851 310.6L857 307L856 302.4L860.8 299.6M853.2 314.2L876.8 300.1M855.3 317.7L861.3 314.1L865.9 316L869.3 313.9M868.2 339.3L874.2 335.7L873.2 331.2L878 328.4M870.3 342.9L894 328.8M872.5 346.5L878.5 342.9L883.1 344.8L886.5 342.7M885.4 368.1L891.4 364.5L890.4 360L895.1 357.2M887.5 371.7L911.1 357.6M889.6 375.2L895.6 371.6L900.3 373.5L903.7 371.5M902.6 396.9L908.6 393.3L907.6 388.7L912.3 385.9M904.7 400.5L928.3 386.4M906.8 404L912.8 400.4L917.5 402.3L920.9 400.3M919.8 425.7L925.8 422.1L924.8 417.5L929.5 414.7M921.9 429.3L945.5 415.2M924 432.8L930 429.2L934.7 431.1L938.1 429M936.9 454.4L943 450.8L942 446.3L946.7 443.5M939.1 458L962.7 443.9M941.2 461.6L947.2 458L951.8 459.9L955.3 457.8M954.1 483.2L960.1 479.6L959.2 475.1L963.9 472.3M956.3 486.8L979.9 472.7M958.4 490.3L964.4 486.8L969 488.6L972.5 486.6M971.3 512L977.3 508.4L976.4 503.9L981.1 501M973.5 515.6L997.1 501.5M975.6 519.1L981.6 515.5L986.2 517.4L989.7 515.4M988.5 540.8L994.5 537.2L993.6 532.6L998.3 529.8M990.7 544.4L1014.3 530.3M992.8 547.9L998.8 544.3L1003.4 546.2L1006.8 544.2M1005.7 569.5L1011.7 566L1010.7 561.4L1015.5 558.6M1007.9 573.2L1031.5 559.1M1010 576.7L1016 573.1L1020.6 575L1024 572.9M1022.9 598.3L1028.9 594.7L1027.9 590.2L1032.7 587.4M1025 601.9L1048.7 587.8M1027.1 605.5L1033.2 601.9L1037.8 603.8L1041.2 601.7M1040.1 627.1L1046.1 623.5L1045.1 619L1049.8 616.1M1042.2 630.7L1065.8 616.6M1044.3 634.2L1050.3 630.6L1055 632.5L1058.4 630.5M1057.3 655.9L1063.3 652.3L1062.3 647.7L1067 644.9M1059.4 659.5L1083 645.4M1061.5 663L1067.5 659.4L1072.2 661.3L1075.6 659.3"/>
<path id="redl" d="M323.3 8.1L836.1 866.7M549.4 -126.9L1062.2 731.6M425.4 165.4L692.4 6"/>
<g id="dots"><use href="#dot" x="438.1" y="108.5"/><use href="#dot" x="433.6" y="101"/><use href="#dot" x="415.5" y="122"/><use href="#dot" x="411" y="114.5"/><use href="#dot" x="500.4" y="110.3"/><use href="#dot" x="495.9" y="102.8"/><use href="#dot" x="477.8" y="123.8"/><use href="#dot" x="473.4" y="116.3"/><use href="#dot" x="455.2" y="137.3"/><use href="#dot" x="450.8" y="129.8"/><use href="#dot" x="432.7" y="150.7"/><use href="#dot" x="428.2" y="143.3"/><use href="#dot" x="533.6" y="114.6"/><use href="#dot" x="508.9" y="124.5"/><use href="#dot" x="513.1" y="131.6"/><use href="#dot" x="486.3" y="138"/><use href="#dot" x="490.6" y="145.1"/><use href="#dot" x="463.7" y="151.4"/><use href="#dot" x="468" y="158.6"/><use href="#dot" x="441.1" y="164.9"/><use href="#dot" x="445.4" y="172.1"/><use href="#dot" x="607.5" y="109.5"/><use href="#dot" x="579.1" y="126.4"/><use href="#dot" x="550.8" y="143.4"/><use href="#dot" x="526.1" y="153.2"/><use href="#dot" x="530.3" y="160.4"/><use href="#dot" x="503.5" y="166.7"/><use href="#dot" x="507.7" y="173.9"/><use href="#dot" x="480.9" y="180.2"/><use href="#dot" x="485.2" y="187.3"/><use href="#dot" x="458.3" y="193.7"/><use href="#dot" x="462.6" y="200.8"/><use href="#dot" x="681.3" y="104.5"/><use href="#dot" x="653" y="121.4"/><use href="#dot" x="624.6" y="138.3"/><use href="#dot" x="596.3" y="155.2"/><use href="#dot" x="568" y="172.1"/><use href="#dot" x="543.3" y="182"/><use href="#dot" x="547.5" y="189.1"/><use href="#dot" x="520.7" y="195.5"/><use href="#dot" x="524.9" y="202.6"/><use href="#dot" x="498.1" y="209"/><use href="#dot" x="502.4" y="216.1"/><use href="#dot" x="475.5" y="222.5"/><use href="#dot" x="479.8" y="229.6"/><use href="#dot" x="698.5" y="133.2"/><use href="#dot" x="670.2" y="150.2"/><use href="#dot" x="641.8" y="167.1"/><use href="#dot" x="613.5" y="184"/><use href="#dot" x="585.2" y="200.9"/><use href="#dot" x="560.4" y="210.8"/><use href="#dot" x="564.7" y="217.9"/><use href="#dot" x="537.9" y="224.3"/><use href="#dot" x="542.1" y="231.4"/><use href="#dot" x="515.3" y="237.8"/><use href="#dot" x="519.5" y="244.9"/><use href="#dot" x="492.7" y="251.3"/><use href="#dot" x="497" y="258.4"/><use href="#dot" x="715.7" y="162"/><use href="#dot" x="687.4" y="178.9"/><use href="#dot" x="659" y="195.8"/><use href="#dot" x="630.7" y="212.8"/><use href="#dot" x="602.4" y="229.7"/><use href="#dot" x="577.6" y="239.6"/><use href="#dot" x="581.9" y="246.7"/><use href="#dot" x="555.1" y="253.1"/><use href="#dot" x="559.3" y="260.2"/><use href="#dot" x="532.5" y="266.5"/><use href="#dot" x="536.7" y="273.7"/><use href="#dot" x="509.9" y="280"/><use href="#dot" x="514.1" y="287.2"/><use href="#dot" x="732.9" y="190.8"/><use href="#dot" x="704.5" y="207.7"/><use href="#dot" x="676.2" y="224.6"/><use href="#dot" x="647.9" y="241.5"/><use href="#dot" x="619.6" y="258.5"/><use href="#dot" x="594.8" y="268.4"/><use href="#dot" x="599.1" y="275.5"/><use href="#dot" x="572.2" y="281.8"/><use href="#dot" x="576.5" y="289"/><use href="#dot" x="549.7" y="295.3"/><use href="#dot" x="553.9" y="302.5"/><use href="#dot" x="527.1" y="308.8"/><use href="#dot" x="531.3" y="315.9"/><use href="#dot" x="750.1" y="219.6"/><use href="#dot" x="721.7" y="236.5"/><use href="#dot" x="693.4" y="253.4"/><use href="#dot" x="665.1" y="270.3"/><use href="#dot" x="636.7" y="287.2"/><use href="#dot" x="612" y="297.1"/><use href="#dot" x="616.3" y="304.3"/><use href="#dot" x="589.4" y="310.6"/><use href="#dot" x="593.7" y="317.7"/><use href="#dot" x="566.8" y="324.1"/><use href="#dot" x="571.1" y="331.2"/><use href="#dot" x="544.3" y="337.6"/><use href="#dot" x="548.5" y="344.7"/><use href="#dot" x="767.3" y="248.3"/><use href="#dot" x="738.9" y="265.3"/><use href="#dot" x="710.6" y="282.2"/><use href="#dot" x="682.3" y="299.1"/><use href="#dot" x="653.9" y="316"/><use href="#dot" x="629.2" y="325.9"/><use href="#dot" x="633.5" y="333"/><use href="#dot" x="606.6" y="339.4"/><use href="#dot" x="610.9" y="346.5"/><use href="#dot" x="584" y="352.9"/><use href="#dot" x="588.3" y="360"/><use href="#dot" x="561.5" y="366.4"/><use href="#dot" x="565.7" y="373.5"/><use href="#dot" x="784.4" y="277.1"/><use href="#dot" x="756.1" y="294"/><use href="#dot" x="727.8" y="311"/><use href="#dot" x="699.4" y="327.9"/><use href="#dot" x="671.1" y="344.8"/><use href="#dot" x="646.4" y="354.7"/><use href="#dot" x="650.6" y="361.8"/><use href="#dot" x="623.8" y="368.2"/><use href="#dot" x="628.1" y="375.3"/><use href="#dot" x="601.2" y="381.7"/><use href="#dot" x="605.5" y="388.8"/><use href="#dot" x="578.6" y="395.1"/><use href="#dot" x="582.9" y="402.3"/><use href="#dot" x="801.6" y="305.9"/><use href="#dot" x="773.3" y="322.8"/><use href="#dot" x="745" y="339.7"/><use href="#dot" x="716.6" y="356.7"/><use href="#dot" x="688.3" y="373.6"/><use href="#dot" x="663.6" y="383.5"/><use href="#dot" x="667.8" y="390.6"/><use href="#dot" x="641" y="396.9"/><use href="#dot" x="645.3" y="404.1"/><use href="#dot" x="618.4" y="410.4"/><use href="#dot" x="622.7" y="417.6"/><use href="#dot" x="595.8" y="423.9"/><use href="#dot" x="600.1" y="431"/><use href="#dot" x="818.8" y="334.7"/><use href="#dot" x="790.5" y="351.6"/><use href="#dot" x="762.2" y="368.5"/><use href="#dot" x="733.8" y="385.4"/><use href="#dot" x="705.5" y="402.4"/><use href="#dot" x="680.8" y="412.2"/><use href="#dot" x="685" y="419.4"/><use href="#dot" x="658.2" y="425.7"/><use href="#dot" x="662.4" y="432.9"/><use href="#dot" x="635.6" y="439.2"/><use href="#dot" x="639.9" y="446.3"/><use href="#dot" x="613" y="452.7"/><use href="#dot" x="617.3" y="459.8"/><use href="#dot" x="836" y="363.4"/><use href="#dot" x="807.7" y="380.4"/><use href="#dot" x="779.3" y="397.3"/><use href="#dot" x="751" y="414.2"/><use href="#dot" x="722.7" y="431.1"/><use href="#dot" x="698" y="441"/><use href="#dot" x="702.2" y="448.1"/><use href="#dot" x="675.4" y="454.5"/><use href="#dot" x="679.6" y="461.6"/><use href="#dot" x="652.8" y="468"/><use href="#dot" x="657" y="475.1"/><use href="#dot" x="630.2" y="481.5"/><use href="#dot" x="634.5" y="488.6"/><use href="#dot" x="853.2" y="392.2"/><use href="#dot" x="824.9" y="409.1"/><use href="#dot" x="796.5" y="426.1"/><use href="#dot" x="768.2" y="443"/><use href="#dot" x="739.9" y="459.9"/><use href="#dot" x="715.1" y="469.8"/><use href="#dot" x="719.4" y="476.9"/><use href="#dot" x="692.6" y="483.3"/><use href="#dot" x="696.8" y="490.4"/><use href="#dot" x="670" y="496.8"/><use href="#dot" x="674.2" y="503.9"/><use href="#dot" x="647.4" y="510.3"/><use href="#dot" x="651.7" y="517.4"/><use href="#dot" x="870.4" y="421"/><use href="#dot" x="842.1" y="437.9"/><use href="#dot" x="813.7" y="454.8"/><use href="#dot" x="785.4" y="471.8"/><use href="#dot" x="757.1" y="488.7"/><use href="#dot" x="732.3" y="498.6"/><use href="#dot" x="736.6" y="505.7"/><use href="#dot" x="709.8" y="512.1"/><use href="#dot" x="714" y="519.2"/><use href="#dot" x="687.2" y="525.5"/><use href="#dot" x="691.4" y="532.7"/><use href="#dot" x="664.6" y="539"/><use href="#dot" x="668.8" y="546.2"/><use href="#dot" x="887.6" y="449.8"/><use href="#dot" x="859.2" y="466.7"/><use href="#dot" x="830.9" y="483.6"/><use href="#dot" x="802.6" y="500.5"/><use href="#dot" x="774.3" y="517.5"/><use href="#dot" x="749.5" y="527.3"/><use href="#dot" x="753.8" y="534.5"/><use href="#dot" x="726.9" y="540.8"/><use href="#dot" x="731.2" y="548"/><use href="#dot" x="704.4" y="554.3"/><use href="#dot" x="708.6" y="561.4"/><use href="#dot" x="681.8" y="567.8"/><use href="#dot" x="686" y="574.9"/><use href="#dot" x="904.8" y="478.6"/><use href="#dot" x="876.4" y="495.5"/><use href="#dot" x="848.1" y="512.4"/><use href="#dot" x="819.8" y="529.3"/><use href="#dot" x="791.4" y="546.2"/><use href="#dot" x="766.7" y="556.1"/><use href="#dot" x="771" y="563.3"/><use href="#dot" x="744.1" y="569.6"/><use href="#dot" x="748.4" y="576.7"/><use href="#dot" x="721.5" y="583.1"/><use href="#dot" x="725.8" y="590.2"/><use href="#dot" x="699" y="596.6"/><use href="#dot" x="703.2" y="603.7"/><use href="#dot" x="922" y="507.3"/><use href="#dot" x="893.6" y="524.3"/><use href="#dot" x="865.3" y="541.2"/><use href="#dot" x="837" y="558.1"/><use href="#dot" x="808.6" y="575"/><use href="#dot" x="783.9" y="584.9"/><use href="#dot" x="788.2" y="592"/><use href="#dot" x="761.3" y="598.4"/><use href="#dot" x="765.6" y="605.5"/><use href="#dot" x="738.7" y="611.9"/><use href="#dot" x="743" y="619"/><use href="#dot" x="716.2" y="625.4"/><use href="#dot" x="939.1" y="536.1"/><use href="#dot" x="910.8" y="553"/><use href="#dot" x="882.5" y="570"/><use href="#dot" x="854.1" y="586.9"/><use href="#dot" x="825.8" y="603.8"/><use href="#dot" x="801.1" y="613.7"/><use href="#dot" x="805.3" y="620.8"/><use href="#dot" x="778.5" y="627.2"/><use href="#dot" x="956.3" y="564.9"/><use href="#dot" x="928" y="581.8"/><use href="#dot" x="899.7" y="598.7"/><use href="#dot" x="871.3" y="615.7"/><use href="#dot" x="973.5" y="593.7"/><use href="#dot" x="945.2" y="610.6"/><use href="#dot" x="916.9" y="627.5"/><use href="#dot" x="990.7" y="622.4"/></g>
</defs>
<rect x="243" y="105" width="1075" height="517" fill="#000"/>
<use href="#gp" stroke="#bfb8b0" stroke-width="1" fill="none" shape-rendering="crispEdges"/>
<path d="M330.6 5.3L331 4.5L330 4.5L329.5 7.2L328.9 10L328 10L328.4 9.2L331.1 10L333.8 10.8L334.3 10L333.3 9.9L332.8 12.7L332.2 15.5L331.3 15.5L331.7 14.7L334.4 15.5L337.1 16.3L337.5 15.5L336.6 15.4L336 18.2L335.5 21L334.5 21L335 20.1L337.7 21L340.4 21.8L340.8 21L339.9 20.9L339.3 23.7L338.8 26.5L337.8 26.5L338.2 25.6L341 26.5L343.7 27.3L344.1 26.5L343.2 26.4L342.6 29.2L342 32L341.1 32L341.5 31.1L344.2 32L347 32.8L347.4 31.9L346.4 31.9L345.9 34.7L345.3 37.5L344.4 37.5L344.8 36.6L347.5 37.5L350.2 38.3L350.7 37.4L349.7 37.4L349.2 40.2L348.6 43L347.7 43L348.1 42.1L350.8 42.9L353.5 43.8L353.9 42.9L353 42.9L352.4 45.7L351.9 48.5L351 48.5L351.4 47.6L354.1 48.4L356.8 49.3L357.2 48.4L356.3 48.4L355.7 51.2L355.2 54L354.2 53.9L354.7 53.1L357.4 53.9L360.1 54.8L360.5 53.9L359.6 53.9L359 56.7L358.5 59.5L357.5 59.4L357.9 58.6L360.7 59.4L363.4 60.3L363.8 59.4L362.9 59.4L362.3 62.2L361.7 65L360.8 64.9L361.2 64.1L363.9 64.9L366.7 65.7L367.1 64.9L366.1 64.9L365.6 67.7L365 70.5L364.1 70.4L364.5 69.6L367.2 70.4L369.9 71.2L370.4 70.4L369.4 70.4L368.9 73.2L368.3 75.9L367.4 75.9L367.8 75.1L370.5 75.9L373.2 76.7L373.6 75.9L372.7 75.9L372.1 78.7L371.6 81.4L370.6 81.4L371.1 80.6L373.8 81.4L376.5 82.2L376.9 81.4L376 81.4L375.4 84.2L374.9 86.9L373.9 86.9L374.3 86.1L377.1 86.9L379.8 87.7L380.2 86.9L379.3 86.9L378.7 89.7L378.1 92.4L377.2 92.4L377.6 91.6L380.3 92.4L383.1 93.2L383.5 92.4L382.5 92.4L382 95.1L381.4 97.9L380.5 97.9L380.9 97.1L383.6 97.9L386.3 98.7L386.8 97.9L385.8 97.9L385.3 100.6L384.7 103.4L383.8 103.4L384.2 102.6L386.9 103.4L389.6 104.2L390 103.4L389.1 103.4L388.5 106.1L388 108.9L387.1 108.9L387.5 108.1L390.2 108.9L392.9 109.7L393.3 108.9L392.4 108.8L391.8 111.6L391.3 114.4L390.3 114.4L390.8 113.6L393.5 114.4L396.2 115.2L396.6 114.4L395.7 114.3L395.1 117.1L394.6 119.9L393.6 119.9L394 119L396.8 119.9L399.5 120.7L399.9 119.9L399 119.8L398.4 122.6L397.8 125.4L396.9 125.4L397.3 124.5L400 125.4L402.8 126.2L403.2 125.4L402.2 125.3L401.7 128.1L401.1 130.9L400.2 130.9L400.6 130L403.3 130.9L406 131.7L406.5 130.8L405.5 130.8L405 133.6L404.4 136.4L403.5 136.4L403.9 135.5L406.6 136.4L409.3 137.2L409.7 136.3L408.8 136.3L408.2 139.1L407.7 141.9L406.7 141.9L407.2 141L409.9 141.8L412.6 142.7L413 141.8L412.1 141.8L411.5 144.6L411 147.4L410 147.4L410.4 146.5L413.2 147.3L415.9 148.2L416.3 147.3L415.4 147.3L414.8 150.1L414.2 152.9L413.3 152.8L413.7 152L416.4 152.8L419.2 153.7L419.6 152.8L418.6 152.8L418.1 155.6L417.5 158.4L416.6 158.3L417 157.5L419.7 158.3L422.4 159.2L422.9 158.3L421.9 158.3L421.4 161.1L420.8 163.9L419.9 163.8L420.3 163L423 163.8L425.7 164.6L426.1 163.8L425.2 163.8L424.7 166.6L424.1 169.4L423.2 169.3L423.6 168.5L426.3 169.3L429 170.1L429.4 169.3L428.5 169.3L427.9 172.1L427.4 174.8L426.4 174.8L426.9 174L429.6 174.8L432.3 175.6L432.7 174.8L431.8 174.8L431.2 177.6L430.7 180.3L429.7 180.3L430.1 179.5L432.9 180.3L435.6 181.1L436 180.3L435.1 180.3L434.5 183.1L433.9 185.8L433 185.8L433.4 185L436.1 185.8L438.9 186.6L439.3 185.8L438.3 185.8L437.8 188.6L437.2 191.3L436.3 191.3L436.7 190.5L439.4 191.3L442.1 192.1L442.6 191.3L441.6 191.3L441.1 194L440.5 196.8L439.6 196.8L440 196L442.7 196.8L445.4 197.6L445.8 196.8L444.9 196.8L444.3 199.5L443.8 202.3L442.8 202.3L443.3 201.5L446 202.3L448.7 203.1L449.1 202.3L448.2 202.3L447.6 205L447.1 207.8L446.1 207.8L446.5 207L449.3 207.8L452 208.6L452.4 207.8L451.5 207.7L450.9 210.5L450.3 213.3L449.4 213.3L449.8 212.5L452.5 213.3L455.3 214.1L455.7 213.3L454.7 213.2L454.2 216L453.6 218.8L452.7 218.8L453.1 217.9L455.8 218.8L458.5 219.6L459 218.8L458 218.7L457.5 221.5L456.9 224.3L456 224.3L456.4 223.4L459.1 224.3L461.8 225.1L462.2 224.3L461.3 224.2L460.8 227L460.2 229.8L459.3 229.8L459.7 228.9L462.4 229.8L465.1 230.6L465.5 229.7L464.6 229.7L464 232.5L463.5 235.3L462.5 235.3L463 234.4L465.7 235.3L468.4 236.1L468.8 235.2L467.9 235.2L467.3 238L466.8 240.8L465.8 240.8L466.2 239.9L469 240.7L471.7 241.6L472.1 240.7L471.2 240.7L470.6 243.5L470 246.3L469.1 246.3L469.5 245.4L472.2 246.2L475 247.1L475.4 246.2L474.4 246.2L473.9 249L473.3 251.8L472.4 251.7L472.8 250.9L475.5 251.7L478.2 252.6L478.7 251.7L477.7 251.7L477.2 254.5L476.6 257.3L475.7 257.2L476.1 256.4L478.8 257.2L481.5 258.1L481.9 257.2L481 257.2L480.4 260L479.9 262.8L478.9 262.7L479.4 261.9L482.1 262.7L484.8 263.6L485.2 262.7L484.3 262.7L483.7 265.5L483.2 268.3L482.2 268.2L482.6 267.4L485.4 268.2L488.1 269L488.5 268.2L487.6 268.2L487 271L486.4 273.7L485.5 273.7L485.9 272.9L488.6 273.7L491.4 274.5L491.8 273.7L490.8 273.7L490.3 276.5L489.7 279.2L488.8 279.2L489.2 278.4L491.9 279.2L494.6 280L495.1 279.2L494.1 279.2L493.6 282L493 284.7L492.1 284.7L492.5 283.9L495.2 284.7L497.9 285.5L498.3 284.7L497.4 284.7L496.9 287.5L496.3 290.2L495.4 290.2L495.8 289.4L498.5 290.2L501.2 291L501.6 290.2L500.7 290.2L500.1 292.9L499.6 295.7L498.6 295.7L499.1 294.9L501.8 295.7L504.5 296.5L504.9 295.7L504 295.7L503.4 298.4L502.9 301.2L501.9 301.2L502.3 300.4L505.1 301.2L507.8 302L508.2 301.2L507.3 301.2L506.7 303.9L506.1 306.7L505.2 306.7L505.6 305.9L508.3 306.7L511.1 307.5L511.5 306.7L510.5 306.6L510 309.4L509.4 312.2L508.5 312.2L508.9 311.4L511.6 312.2L514.3 313L514.8 312.2L513.8 312.1L513.3 314.9L512.7 317.7L511.8 317.7L512.2 316.8L514.9 317.7L517.6 318.5L518 317.7L517.1 317.6L516.5 320.4L516 323.2L515 323.2L515.5 322.3L518.2 323.2L520.9 324L521.3 323.2L520.4 323.1L519.8 325.9L519.3 328.7L518.3 328.7L518.7 327.8L521.5 328.7L524.2 329.5L524.6 328.6L523.7 328.6L523.1 331.4L522.5 334.2L521.6 334.2L522 333.3L524.7 334.2L527.5 335L527.9 334.1L527 334.1L526.4 336.9L525.8 339.7L524.9 339.7L525.3 338.8L528 339.6L530.7 340.5L531.2 339.6L530.2 339.6L529.7 342.4L529.1 345.2L528.2 345.2L528.6 344.3L531.3 345.1L534 346L534.4 345.1L533.5 345.1L533 347.9L532.4 350.7L531.5 350.6L531.9 349.8L534.6 350.6L537.3 351.5L537.7 350.6L536.8 350.6L536.2 353.4L535.7 356.2L534.7 356.1L535.2 355.3L537.9 356.1L540.6 357L541 356.1L540.1 356.1L539.5 358.9L539 361.7L538 361.6L538.4 360.8L541.2 361.6L543.9 362.5L544.3 361.6L543.4 361.6L542.8 364.4L542.2 367.2L541.3 367.1L541.7 366.3L544.4 367.1L547.2 367.9L547.6 367.1L546.6 367.1L546.1 369.9L545.5 372.7L544.6 372.6L545 371.8L547.7 372.6L550.4 373.4L550.9 372.6L549.9 372.6L549.4 375.4L548.8 378.1L547.9 378.1L548.3 377.3L551 378.1L553.7 378.9L554.1 378.1L553.2 378.1L552.6 380.9L552.1 383.6L551.1 383.6L551.6 382.8L554.3 383.6L557 384.4L557.4 383.6L556.5 383.6L555.9 386.4L555.4 389.1L554.4 389.1L554.9 388.3L557.6 389.1L560.3 389.9L560.7 389.1L559.8 389.1L559.2 391.8L558.6 394.6L557.7 394.6L558.1 393.8L560.8 394.6L563.6 395.4L564 394.6L563.1 394.6L562.5 397.3L561.9 400.1L561 400.1L561.4 399.3L564.1 400.1L566.8 400.9L567.3 400.1L566.3 400.1L565.8 402.8L565.2 405.6L564.3 405.6L564.7 404.8L567.4 405.6L570.1 406.4L570.6 405.6L569.6 405.5L569.1 408.3L568.5 411.1L567.6 411.1L568 410.3L570.7 411.1L573.4 411.9L573.8 411.1L572.9 411L572.3 413.8L571.8 416.6L570.8 416.6L571.3 415.7L574 416.6L576.7 417.4L577.1 416.6L576.2 416.5L575.6 419.3L575.1 422.1L574.1 422.1L574.5 421.2L577.3 422.1L580 422.9L580.4 422.1L579.5 422L578.9 424.8L578.3 427.6L577.4 427.6L577.8 426.7L580.5 427.6L583.3 428.4L583.7 427.5L582.7 427.5L582.2 430.3L581.6 433.1L580.7 433.1L581.1 432.2L583.8 433.1L586.5 433.9L587 433L586 433L585.5 435.8L584.9 438.6L584 438.6L584.4 437.7L587.1 438.5L589.8 439.4L590.2 438.5L589.3 438.5L588.7 441.3L588.2 444.1L587.2 444.1L587.7 443.2L590.4 444L593.1 444.9L593.5 444L592.6 444L592 446.8L591.5 449.6L590.5 449.5L591 448.7L593.7 449.5L596.4 450.4L596.8 449.5L595.9 449.5L595.3 452.3L594.7 455.1L593.8 455L594.2 454.2L596.9 455L599.7 455.9L600.1 455L599.2 455L598.6 457.8L598 460.6L597.1 460.5L597.5 459.7L600.2 460.5L602.9 461.4L603.4 460.5L602.4 460.5L601.9 463.3L601.3 466.1L600.4 466L600.8 465.2L603.5 466L606.2 466.8L606.7 466L605.7 466L605.2 468.8L604.6 471.6L603.7 471.5L604.1 470.7L606.8 471.5L609.5 472.3L609.9 471.5L609 471.5L608.4 474.3L607.9 477L606.9 477L607.4 476.2L610.1 477L612.8 477.8L613.2 477L612.3 477L611.7 479.8L611.2 482.5L610.2 482.5L610.6 481.7L613.4 482.5L616.1 483.3L616.5 482.5L615.6 482.5L615 485.3L614.4 488L613.5 488L613.9 487.2L616.6 488L619.4 488.8L619.8 488L618.8 488L618.3 490.7L617.7 493.5L616.8 493.5L617.2 492.7L619.9 493.5L622.6 494.3L623.1 493.5L622.1 493.5L621.6 496.2L621 499L620.1 499L620.5 498.2L623.2 499L625.9 499.8L626.3 499L625.4 499L624.8 501.7L624.3 504.5L623.3 504.5L623.8 503.7L626.5 504.5L629.2 505.3L629.6 504.5L628.7 504.4L628.1 507.2L627.6 510L626.6 510L627.1 509.2L629.8 510L632.5 510.8L632.9 510L632 509.9L631.4 512.7L630.8 515.5L629.9 515.5L630.3 514.6L633 515.5L635.8 516.3L636.2 515.5L635.3 515.4L634.7 518.2L634.1 521L633.2 521L633.6 520.1L636.3 521L639 521.8L639.5 521L638.5 520.9L638 523.7L637.4 526.5L636.5 526.5L636.9 525.6L639.6 526.5L642.3 527.3L642.8 526.5L641.8 526.4L641.3 529.2L640.7 532L639.8 532L640.2 531.1L642.9 532L645.6 532.8L646 531.9L645.1 531.9L644.5 534.7L644 537.5L643 537.5L643.5 536.6L646.2 537.5L648.9 538.3L649.3 537.4L648.4 537.4L647.8 540.2L647.3 543L646.3 543L646.7 542.1L649.5 542.9L652.2 543.8L652.6 542.9L651.7 542.9L651.1 545.7L650.5 548.5L649.6 548.5L650 547.6L652.7 548.4L655.5 549.3L655.9 548.4L654.9 548.4L654.4 551.2L653.8 554L652.9 553.9L653.3 553.1L656 553.9L658.7 554.8L659.2 553.9L658.2 553.9L657.7 556.7L657.1 559.5L656.2 559.4L656.6 558.6L659.3 559.4L662 560.3L662.4 559.4L661.5 559.4L660.9 562.2L660.4 565L659.4 564.9L659.9 564.1L662.6 564.9L665.3 565.7L665.7 564.9L664.8 564.9L664.2 567.7L663.7 570.5L662.7 570.4L663.2 569.6L665.9 570.4L668.6 571.2L669 570.4L668.1 570.4L667.5 573.2L666.9 575.9L666 575.9L666.4 575.1L669.1 575.9L671.9 576.7L672.3 575.9L671.4 575.9L670.8 578.7L670.2 581.4L669.3 581.4L669.7 580.6L672.4 581.4L675.1 582.2L675.6 581.4L674.6 581.4L674.1 584.2L673.5 586.9L672.6 586.9L673 586.1L675.7 586.9L678.4 587.7L678.9 586.9L677.9 586.9L677.4 589.6L676.8 592.4L675.9 592.4L676.3 591.6L679 592.4L681.7 593.2L682.1 592.4L681.2 592.4L680.6 595.1L680.1 597.9L679.1 597.9L679.6 597.1L682.3 597.9L685 598.7L685.4 597.9L684.5 597.9L683.9 600.6L683.4 603.4L682.4 603.4L682.8 602.6L685.6 603.4L688.3 604.2L688.7 603.4L687.8 603.3L687.2 606.1L686.6 608.9L685.7 608.9L686.1 608.1L688.8 608.9L691.6 609.7L692 608.9L691 608.8L690.5 611.6L689.9 614.4L689 614.4L689.4 613.5L692.1 614.4L694.8 615.2L695.3 614.4L694.3 614.3L693.8 617.1L693.2 619.9L692.3 619.9L692.7 619L695.4 619.9L698.1 620.7L698.5 619.9L697.6 619.8L697 622.6L696.5 625.4L695.5 625.4L696 624.5L698.7 625.4L701.4 626.2L701.8 625.4L700.9 625.3L700.3 628.1L699.8 630.9L698.8 630.9L699.3 630L702 630.9L704.7 631.7L705.1 630.8L704.2 630.8L703.6 633.6L703 636.4L702.1 636.4L702.5 635.5L705.3 636.4L708 637.2L708.4 636.3L707.5 636.3L706.9 639.1L706.3 641.9L705.4 641.9L705.8 641L708.5 641.8L711.2 642.7L711.7 641.8L710.7 641.8L710.2 644.6L709.6 647.4L708.7 647.4L709.1 646.5L711.8 647.3L714.5 648.2L715 647.3L714 647.3L713.5 650.1L712.9 652.9L712 652.8L712.4 652L715.1 652.8L717.8 653.7L718.2 652.8L717.3 652.8L716.7 655.6L716.2 658.4L715.2 658.3L715.7 657.5L718.4 658.3L721.1 659.2L721.5 658.3L720.6 658.3L720 661.1L719.5 663.9L718.5 663.8L718.9 663L721.7 663.8L724.4 664.6L724.8 663.8L723.9 663.8L723.3 666.6L722.7 669.4L721.8 669.3L722.2 668.5L724.9 669.3L727.7 670.1L728.1 669.3L727.1 669.3L726.6 672.1L726 674.8L725.1 674.8L725.5 674L728.2 674.8L730.9 675.6L731.4 674.8L730.4 674.8L729.9 677.6L729.3 680.3L728.4 680.3L728.8 679.5L731.5 680.3L734.2 681.1L734.6 680.3L733.7 680.3L733.1 683.1L732.6 685.8L731.6 685.8L732.1 685L734.8 685.8L737.5 686.6L737.9 685.8L737 685.8L736.4 688.5L735.9 691.3L734.9 691.3L735.4 690.5L738.1 691.3L740.8 692.1L741.2 691.3L740.3 691.3L739.7 694L739.1 696.8L738.2 696.8L738.6 696L741.4 696.8L744.1 697.6L744.5 696.8L743.6 696.8L743 699.5L742.4 702.3L741.5 702.3L741.9 701.5L744.6 702.3L747.3 703.1L747.8 702.3L746.8 702.3L746.3 705L745.7 707.8L744.8 707.8L745.2 707L747.9 707.8L750.6 708.6L751.1 707.8L750.1 707.7L749.6 710.5L749 713.3L748.1 713.3L748.5 712.4L751.2 713.3L753.9 714.1L754.3 713.3L753.4 713.2L752.8 716L752.3 718.8L751.3 718.8L751.8 717.9L754.5 718.8L757.2 719.6L757.6 718.8L756.7 718.7L756.1 721.5L755.6 724.3L754.6 724.3L755 723.4L757.8 724.3L760.5 725.1L760.9 724.3L760 724.2L759.4 727L758.8 729.8L757.9 729.8L758.3 728.9L761 729.8L763.8 730.6L764.2 729.7L763.2 729.7L762.7 732.5L762.1 735.3L761.2 735.3L761.6 734.4L764.3 735.3L767 736.1L767.5 735.2L766.5 735.2L766 738L765.4 740.8L764.5 740.8L764.9 739.9L767.6 740.7L770.3 741.6L770.7 740.7L769.8 740.7L769.2 743.5L768.7 746.3L767.7 746.3L768.2 745.4L770.9 746.2L773.6 747.1L774 746.2L773.1 746.2L772.5 749L772 751.8L771 751.7L771.5 750.9L774.2 751.7L776.9 752.6L777.3 751.7L776.4 751.7L775.8 754.5L775.2 757.3L774.3 757.2L774.7 756.4L777.5 757.2L780.2 758.1L780.6 757.2L779.7 757.2L779.1 760L778.5 762.8L777.6 762.7L778 761.9L780.7 762.7L783.4 763.5L783.9 762.7L782.9 762.7L782.4 765.5L781.8 768.3L780.9 768.2L781.3 767.4L784 768.2L786.7 769L787.2 768.2L786.2 768.2L785.7 771L785.1 773.7L784.2 773.7L784.6 772.9L787.3 773.7L790 774.5L790.4 773.7L789.5 773.7L788.9 776.5L788.4 779.2L787.4 779.2L787.9 778.4L790.6 779.2L793.3 780L793.7 779.2L792.8 779.2L792.2 782L791.7 784.7L790.7 784.7L791.1 783.9L793.9 784.7L796.6 785.5L797 784.7L796.1 784.7L795.5 787.4L794.9 790.2L794 790.2L794.4 789.4L797.1 790.2L799.9 791L800.3 790.2L799.3 790.2L798.8 792.9L798.2 795.7L797.3 795.7L797.7 794.9L800.4 795.7L803.1 796.5L803.6 795.7L802.6 795.7L802.1 798.4L801.5 801.2L800.6 801.2L801 800.4L803.7 801.2L806.4 802L806.8 801.2L805.9 801.2L805.3 803.9L804.8 806.7L803.8 806.7L804.3 805.9L807 806.7L809.7 807.5L810.1 806.7L809.2 806.6L808.6 809.4L808.1 812.2L807.1 812.2L807.6 811.4L810.3 812.2L813 813L813.4 812.2L812.5 812.1L811.9 814.9L811.3 817.7L810.4 817.7L810.8 816.8L813.6 817.7L816.3 818.5L816.7 817.7L815.8 817.6L815.2 820.4L814.6 823.2L813.7 823.2L814.1 822.3L816.8 823.2L819.5 824L820 823.2L819 823.1L818.5 825.9L817.9 828.7L817 828.7L817.4 827.8L820.1 828.7L822.8 829.5L823.3 828.6L822.3 828.6L821.8 831.4L821.2 834.2L820.3 834.2L820.7 833.3L823.4 834.2L826.1 835L826.5 834.1L825.6 834.1L825 836.9L824.5 839.7L823.5 839.7L824 838.8L826.7 839.6L829.4 840.5L829.8 839.6L828.9 839.6L828.3 842.4L827.8 845.2L826.8 845.2L827.2 844.3L830 845.1L832.7 846L833.1 845.1L832.2 845.1L831.6 847.9L831 850.7L830.1 850.6L830.5 849.8L833.2 850.6L836 851.5L836.4 850.6L835.4 850.6L834.9 853.4L834.3 856.2L833.4 856.1L833.8 855.3L836.5 856.1L839.2 857L839.7 856.1L838.7 856.1L838.2 858.9L837.6 861.7L836.7 861.6L837.1 860.8L839.8 861.6L842.5 862.4L842.9 861.6L842 861.6" stroke="#88bcf8" stroke-width="1.9" fill="none"/>
<path d="M330.6 5.3L331 4.5L330 4.5L329.5 7.2L328.9 10L328 10L328.4 9.2L331.1 10L333.8 10.8L334.3 10L333.3 9.9L332.8 12.7L332.2 15.5L331.3 15.5L331.7 14.7L334.4 15.5L337.1 16.3L337.5 15.5L336.6 15.4L336 18.2L335.5 21L334.5 21L335 20.1L337.7 21L340.4 21.8L340.8 21L339.9 20.9L339.3 23.7L338.8 26.5L337.8 26.5L338.2 25.6L341 26.5L343.7 27.3L344.1 26.5L343.2 26.4L342.6 29.2L342 32L341.1 32L341.5 31.1L344.2 32L347 32.8L347.4 31.9L346.4 31.9L345.9 34.7L345.3 37.5L344.4 37.5L344.8 36.6L347.5 37.5L350.2 38.3L350.7 37.4L349.7 37.4L349.2 40.2L348.6 43L347.7 43L348.1 42.1L350.8 42.9L353.5 43.8L353.9 42.9L353 42.9L352.4 45.7L351.9 48.5L351 48.5L351.4 47.6L354.1 48.4L356.8 49.3L357.2 48.4L356.3 48.4L355.7 51.2L355.2 54L354.2 53.9L354.7 53.1L357.4 53.9L360.1 54.8L360.5 53.9L359.6 53.9L359 56.7L358.5 59.5L357.5 59.4L357.9 58.6L360.7 59.4L363.4 60.3L363.8 59.4L362.9 59.4L362.3 62.2L361.7 65L360.8 64.9L361.2 64.1L363.9 64.9L366.7 65.7L367.1 64.9L366.1 64.9L365.6 67.7L365 70.5L364.1 70.4L364.5 69.6L367.2 70.4L369.9 71.2L370.4 70.4L369.4 70.4L368.9 73.2L368.3 75.9L367.4 75.9L367.8 75.1L370.5 75.9L373.2 76.7L373.6 75.9L372.7 75.9L372.1 78.7L371.6 81.4L370.6 81.4L371.1 80.6L373.8 81.4L376.5 82.2L376.9 81.4L376 81.4L375.4 84.2L374.9 86.9L373.9 86.9L374.3 86.1L377.1 86.9L379.8 87.7L380.2 86.9L379.3 86.9L378.7 89.7L378.1 92.4L377.2 92.4L377.6 91.6L380.3 92.4L383.1 93.2L383.5 92.4L382.5 92.4L382 95.1L381.4 97.9L380.5 97.9L380.9 97.1L383.6 97.9L386.3 98.7L386.8 97.9L385.8 97.9L385.3 100.6L384.7 103.4L383.8 103.4L384.2 102.6L386.9 103.4L389.6 104.2L390 103.4L389.1 103.4L388.5 106.1L388 108.9L387.1 108.9L387.5 108.1L390.2 108.9L392.9 109.7L393.3 108.9L392.4 108.8L391.8 111.6L391.3 114.4L390.3 114.4L390.8 113.6L393.5 114.4L396.2 115.2L396.6 114.4L395.7 114.3L395.1 117.1L394.6 119.9L393.6 119.9L394 119L396.8 119.9L399.5 120.7L399.9 119.9L399 119.8L398.4 122.6L397.8 125.4L396.9 125.4L397.3 124.5L400 125.4L402.8 126.2L403.2 125.4L402.2 125.3L401.7 128.1L401.1 130.9L400.2 130.9L400.6 130L403.3 130.9L406 131.7L406.5 130.8L405.5 130.8L405 133.6L404.4 136.4L403.5 136.4L403.9 135.5L406.6 136.4L409.3 137.2L409.7 136.3L408.8 136.3L408.2 139.1L407.7 141.9L406.7 141.9L407.2 141L409.9 141.8L412.6 142.7L413 141.8L412.1 141.8L411.5 144.6L411 147.4L410 147.4L410.4 146.5L413.2 147.3L415.9 148.2L416.3 147.3L415.4 147.3L414.8 150.1L414.2 152.9L413.3 152.8L413.7 152L416.4 152.8L419.2 153.7L419.6 152.8L418.6 152.8L418.1 155.6L417.5 158.4L416.6 158.3L417 157.5L419.7 158.3L422.4 159.2L422.9 158.3L421.9 158.3L421.4 161.1L420.8 163.9L419.9 163.8L420.3 163L423 163.8L425.7 164.6L426.1 163.8L425.2 163.8L424.7 166.6L424.1 169.4L423.2 169.3L423.6 168.5L426.3 169.3L429 170.1L429.4 169.3L428.5 169.3L427.9 172.1L427.4 174.8L426.4 174.8L426.9 174L429.6 174.8L432.3 175.6L432.7 174.8L431.8 174.8L431.2 177.6L430.7 180.3L429.7 180.3L430.1 179.5L432.9 180.3L435.6 181.1L436 180.3L435.1 180.3L434.5 183.1L433.9 185.8L433 185.8L433.4 185L436.1 185.8L438.9 186.6L439.3 185.8L438.3 185.8L437.8 188.6L437.2 191.3L436.3 191.3L436.7 190.5L439.4 191.3L442.1 192.1L442.6 191.3L441.6 191.3L441.1 194L440.5 196.8L439.6 196.8L440 196L442.7 196.8L445.4 197.6L445.8 196.8L444.9 196.8L444.3 199.5L443.8 202.3L442.8 202.3L443.3 201.5L446 202.3L448.7 203.1L449.1 202.3L448.2 202.3L447.6 205L447.1 207.8L446.1 207.8L446.5 207L449.3 207.8L452 208.6L452.4 207.8L451.5 207.7L450.9 210.5L450.3 213.3L449.4 213.3L449.8 212.5L452.5 213.3L455.3 214.1L455.7 213.3L454.7 213.2L454.2 216L453.6 218.8L452.7 218.8L453.1 217.9L455.8 218.8L458.5 219.6L459 218.8L458 218.7L457.5 221.5L456.9 224.3L456 224.3L456.4 223.4L459.1 224.3L461.8 225.1L462.2 224.3L461.3 224.2L460.8 227L460.2 229.8L459.3 229.8L459.7 228.9L462.4 229.8L465.1 230.6L465.5 229.7L464.6 229.7L464 232.5L463.5 235.3L462.5 235.3L463 234.4L465.7 235.3L468.4 236.1L468.8 235.2L467.9 235.2L467.3 238L466.8 240.8L465.8 240.8L466.2 239.9L469 240.7L471.7 241.6L472.1 240.7L471.2 240.7L470.6 243.5L470 246.3L469.1 246.3L469.5 245.4L472.2 246.2L475 247.1L475.4 246.2L474.4 246.2L473.9 249L473.3 251.8L472.4 251.7L472.8 250.9L475.5 251.7L478.2 252.6L478.7 251.7L477.7 251.7L477.2 254.5L476.6 257.3L475.7 257.2L476.1 256.4L478.8 257.2L481.5 258.1L481.9 257.2L481 257.2L480.4 260L479.9 262.8L478.9 262.7L479.4 261.9L482.1 262.7L484.8 263.6L485.2 262.7L484.3 262.7L483.7 265.5L483.2 268.3L482.2 268.2L482.6 267.4L485.4 268.2L488.1 269L488.5 268.2L487.6 268.2L487 271L486.4 273.7L485.5 273.7L485.9 272.9L488.6 273.7L491.4 274.5L491.8 273.7L490.8 273.7L490.3 276.5L489.7 279.2L488.8 279.2L489.2 278.4L491.9 279.2L494.6 280L495.1 279.2L494.1 279.2L493.6 282L493 284.7L492.1 284.7L492.5 283.9L495.2 284.7L497.9 285.5L498.3 284.7L497.4 284.7L496.9 287.5L496.3 290.2L495.4 290.2L495.8 289.4L498.5 290.2L501.2 291L501.6 290.2L500.7 290.2L500.1 292.9L499.6 295.7L498.6 295.7L499.1 294.9L501.8 295.7L504.5 296.5L504.9 295.7L504 295.7L503.4 298.4L502.9 301.2L501.9 301.2L502.3 300.4L505.1 301.2L507.8 302L508.2 301.2L507.3 301.2L506.7 303.9L506.1 306.7L505.2 306.7L505.6 305.9L508.3 306.7L511.1 307.5L511.5 306.7L510.5 306.6L510 309.4L509.4 312.2L508.5 312.2L508.9 311.4L511.6 312.2L514.3 313L514.8 312.2L513.8 312.1L513.3 314.9L512.7 317.7L511.8 317.7L512.2 316.8L514.9 317.7L517.6 318.5L518 317.7L517.1 317.6L516.5 320.4L516 323.2L515 323.2L515.5 322.3L518.2 323.2L520.9 324L521.3 323.2L520.4 323.1L519.8 325.9L519.3 328.7L518.3 328.7L518.7 327.8L521.5 328.7L524.2 329.5L524.6 328.6L523.7 328.6L523.1 331.4L522.5 334.2L521.6 334.2L522 333.3L524.7 334.2L527.5 335L527.9 334.1L527 334.1L526.4 336.9L525.8 339.7L524.9 339.7L525.3 338.8L528 339.6L530.7 340.5L531.2 339.6L530.2 339.6L529.7 342.4L529.1 345.2L528.2 345.2L528.6 344.3L531.3 345.1L534 346L534.4 345.1L533.5 345.1L533 347.9L532.4 350.7L531.5 350.6L531.9 349.8L534.6 350.6L537.3 351.5L537.7 350.6L536.8 350.6L536.2 353.4L535.7 356.2L534.7 356.1L535.2 355.3L537.9 356.1L540.6 357L541 356.1L540.1 356.1L539.5 358.9L539 361.7L538 361.6L538.4 360.8L541.2 361.6L543.9 362.5L544.3 361.6L543.4 361.6L542.8 364.4L542.2 367.2L541.3 367.1L541.7 366.3L544.4 367.1L547.2 367.9L547.6 367.1L546.6 367.1L546.1 369.9L545.5 372.7L544.6 372.6L545 371.8L547.7 372.6L550.4 373.4L550.9 372.6L549.9 372.6L549.4 375.4L548.8 378.1L547.9 378.1L548.3 377.3L551 378.1L553.7 378.9L554.1 378.1L553.2 378.1L552.6 380.9L552.1 383.6L551.1 383.6L551.6 382.8L554.3 383.6L557 384.4L557.4 383.6L556.5 383.6L555.9 386.4L555.4 389.1L554.4 389.1L554.9 388.3L557.6 389.1L560.3 389.9L560.7 389.1L559.8 389.1L559.2 391.8L558.6 394.6L557.7 394.6L558.1 393.8L560.8 394.6L563.6 395.4L564 394.6L563.1 394.6L562.5 397.3L561.9 400.1L561 400.1L561.4 399.3L564.1 400.1L566.8 400.9L567.3 400.1L566.3 400.1L565.8 402.8L565.2 405.6L564.3 405.6L564.7 404.8L567.4 405.6L570.1 406.4L570.6 405.6L569.6 405.5L569.1 408.3L568.5 411.1L567.6 411.1L568 410.3L570.7 411.1L573.4 411.9L573.8 411.1L572.9 411L572.3 413.8L571.8 416.6L570.8 416.6L571.3 415.7L574 416.6L576.7 417.4L577.1 416.6L576.2 416.5L575.6 419.3L575.1 422.1L574.1 422.1L574.5 421.2L577.3 422.1L580 422.9L580.4 422.1L579.5 422L578.9 424.8L578.3 427.6L577.4 427.6L577.8 426.7L580.5 427.6L583.3 428.4L583.7 427.5L582.7 427.5L582.2 430.3L581.6 433.1L580.7 433.1L581.1 432.2L583.8 433.1L586.5 433.9L587 433L586 433L585.5 435.8L584.9 438.6L584 438.6L584.4 437.7L587.1 438.5L589.8 439.4L590.2 438.5L589.3 438.5L588.7 441.3L588.2 444.1L587.2 444.1L587.7 443.2L590.4 444L593.1 444.9L593.5 444L592.6 444L592 446.8L591.5 449.6L590.5 449.5L591 448.7L593.7 449.5L596.4 450.4L596.8 449.5L595.9 449.5L595.3 452.3L594.7 455.1L593.8 455L594.2 454.2L596.9 455L599.7 455.9L600.1 455L599.2 455L598.6 457.8L598 460.6L597.1 460.5L597.5 459.7L600.2 460.5L602.9 461.4L603.4 460.5L602.4 460.5L601.9 463.3L601.3 466.1L600.4 466L600.8 465.2L603.5 466L606.2 466.8L606.7 466L605.7 466L605.2 468.8L604.6 471.6L603.7 471.5L604.1 470.7L606.8 471.5L609.5 472.3L609.9 471.5L609 471.5L608.4 474.3L607.9 477L606.9 477L607.4 476.2L610.1 477L612.8 477.8L613.2 477L612.3 477L611.7 479.8L611.2 482.5L610.2 482.5L610.6 481.7L613.4 482.5L616.1 483.3L616.5 482.5L615.6 482.5L615 485.3L614.4 488L613.5 488L613.9 487.2L616.6 488L619.4 488.8L619.8 488L618.8 488L618.3 490.7L617.7 493.5L616.8 493.5L617.2 492.7L619.9 493.5L622.6 494.3L623.1 493.5L622.1 493.5L621.6 496.2L621 499L620.1 499L620.5 498.2L623.2 499L625.9 499.8L626.3 499L625.4 499L624.8 501.7L624.3 504.5L623.3 504.5L623.8 503.7L626.5 504.5L629.2 505.3L629.6 504.5L628.7 504.4L628.1 507.2L627.6 510L626.6 510L627.1 509.2L629.8 510L632.5 510.8L632.9 510L632 509.9L631.4 512.7L630.8 515.5L629.9 515.5L630.3 514.6L633 515.5L635.8 516.3L636.2 515.5L635.3 515.4L634.7 518.2L634.1 521L633.2 521L633.6 520.1L636.3 521L639 521.8L639.5 521L638.5 520.9L638 523.7L637.4 526.5L636.5 526.5L636.9 525.6L639.6 526.5L642.3 527.3L642.8 526.5L641.8 526.4L641.3 529.2L640.7 532L639.8 532L640.2 531.1L642.9 532L645.6 532.8L646 531.9L645.1 531.9L644.5 534.7L644 537.5L643 537.5L643.5 536.6L646.2 537.5L648.9 538.3L649.3 537.4L648.4 537.4L647.8 540.2L647.3 543L646.3 543L646.7 542.1L649.5 542.9L652.2 543.8L652.6 542.9L651.7 542.9L651.1 545.7L650.5 548.5L649.6 548.5L650 547.6L652.7 548.4L655.5 549.3L655.9 548.4L654.9 548.4L654.4 551.2L653.8 554L652.9 553.9L653.3 553.1L656 553.9L658.7 554.8L659.2 553.9L658.2 553.9L657.7 556.7L657.1 559.5L656.2 559.4L656.6 558.6L659.3 559.4L662 560.3L662.4 559.4L661.5 559.4L660.9 562.2L660.4 565L659.4 564.9L659.9 564.1L662.6 564.9L665.3 565.7L665.7 564.9L664.8 564.9L664.2 567.7L663.7 570.5L662.7 570.4L663.2 569.6L665.9 570.4L668.6 571.2L669 570.4L668.1 570.4L667.5 573.2L666.9 575.9L666 575.9L666.4 575.1L669.1 575.9L671.9 576.7L672.3 575.9L671.4 575.9L670.8 578.7L670.2 581.4L669.3 581.4L669.7 580.6L672.4 581.4L675.1 582.2L675.6 581.4L674.6 581.4L674.1 584.2L673.5 586.9L672.6 586.9L673 586.1L675.7 586.9L678.4 587.7L678.9 586.9L677.9 586.9L677.4 589.6L676.8 592.4L675.9 592.4L676.3 591.6L679 592.4L681.7 593.2L682.1 592.4L681.2 592.4L680.6 595.1L680.1 597.9L679.1 597.9L679.6 597.1L682.3 597.9L685 598.7L685.4 597.9L684.5 597.9L683.9 600.6L683.4 603.4L682.4 603.4L682.8 602.6L685.6 603.4L688.3 604.2L688.7 603.4L687.8 603.3L687.2 606.1L686.6 608.9L685.7 608.9L686.1 608.1L688.8 608.9L691.6 609.7L692 608.9L691 608.8L690.5 611.6L689.9 614.4L689 614.4L689.4 613.5L692.1 614.4L694.8 615.2L695.3 614.4L694.3 614.3L693.8 617.1L693.2 619.9L692.3 619.9L692.7 619L695.4 619.9L698.1 620.7L698.5 619.9L697.6 619.8L697 622.6L696.5 625.4L695.5 625.4L696 624.5L698.7 625.4L701.4 626.2L701.8 625.4L700.9 625.3L700.3 628.1L699.8 630.9L698.8 630.9L699.3 630L702 630.9L704.7 631.7L705.1 630.8L704.2 630.8L703.6 633.6L703 636.4L702.1 636.4L702.5 635.5L705.3 636.4L708 637.2L708.4 636.3L707.5 636.3L706.9 639.1L706.3 641.9L705.4 641.9L705.8 641L708.5 641.8L711.2 642.7L711.7 641.8L710.7 641.8L710.2 644.6L709.6 647.4L708.7 647.4L709.1 646.5L711.8 647.3L714.5 648.2L715 647.3L714 647.3L713.5 650.1L712.9 652.9L712 652.8L712.4 652L715.1 652.8L717.8 653.7L718.2 652.8L717.3 652.8L716.7 655.6L716.2 658.4L715.2 658.3L715.7 657.5L718.4 658.3L721.1 659.2L721.5 658.3L720.6 658.3L720 661.1L719.5 663.9L718.5 663.8L718.9 663L721.7 663.8L724.4 664.6L724.8 663.8L723.9 663.8L723.3 666.6L722.7 669.4L721.8 669.3L722.2 668.5L724.9 669.3L727.7 670.1L728.1 669.3L727.1 669.3L726.6 672.1L726 674.8L725.1 674.8L725.5 674L728.2 674.8L730.9 675.6L731.4 674.8L730.4 674.8L729.9 677.6L729.3 680.3L728.4 680.3L728.8 679.5L731.5 680.3L734.2 681.1L734.6 680.3L733.7 680.3L733.1 683.1L732.6 685.8L731.6 685.8L732.1 685L734.8 685.8L737.5 686.6L737.9 685.8L737 685.8L736.4 688.5L735.9 691.3L734.9 691.3L735.4 690.5L738.1 691.3L740.8 692.1L741.2 691.3L740.3 691.3L739.7 694L739.1 696.8L738.2 696.8L738.6 696L741.4 696.8L744.1 697.6L744.5 696.8L743.6 696.8L743 699.5L742.4 702.3L741.5 702.3L741.9 701.5L744.6 702.3L747.3 703.1L747.8 702.3L746.8 702.3L746.3 705L745.7 707.8L744.8 707.8L745.2 707L747.9 707.8L750.6 708.6L751.1 707.8L750.1 707.7L749.6 710.5L749 713.3L748.1 713.3L748.5 712.4L751.2 713.3L753.9 714.1L754.3 713.3L753.4 713.2L752.8 716L752.3 718.8L751.3 718.8L751.8 717.9L754.5 718.8L757.2 719.6L757.6 718.8L756.7 718.7L756.1 721.5L755.6 724.3L754.6 724.3L755 723.4L757.8 724.3L760.5 725.1L760.9 724.3L760 724.2L759.4 727L758.8 729.8L757.9 729.8L758.3 728.9L761 729.8L763.8 730.6L764.2 729.7L763.2 729.7L762.7 732.5L762.1 735.3L761.2 735.3L761.6 734.4L764.3 735.3L767 736.1L767.5 735.2L766.5 735.2L766 738L765.4 740.8L764.5 740.8L764.9 739.9L767.6 740.7L770.3 741.6L770.7 740.7L769.8 740.7L769.2 743.5L768.7 746.3L767.7 746.3L768.2 745.4L770.9 746.2L773.6 747.1L774 746.2L773.1 746.2L772.5 749L772 751.8L771 751.7L771.5 750.9L774.2 751.7L776.9 752.6L777.3 751.7L776.4 751.7L775.8 754.5L775.2 757.3L774.3 757.2L774.7 756.4L777.5 757.2L780.2 758.1L780.6 757.2L779.7 757.2L779.1 760L778.5 762.8L777.6 762.7L778 761.9L780.7 762.7L783.4 763.5L783.9 762.7L782.9 762.7L782.4 765.5L781.8 768.3L780.9 768.2L781.3 767.4L784 768.2L786.7 769L787.2 768.2L786.2 768.2L785.7 771L785.1 773.7L784.2 773.7L784.6 772.9L787.3 773.7L790 774.5L790.4 773.7L789.5 773.7L788.9 776.5L788.4 779.2L787.4 779.2L787.9 778.4L790.6 779.2L793.3 780L793.7 779.2L792.8 779.2L792.2 782L791.7 784.7L790.7 784.7L791.1 783.9L793.9 784.7L796.6 785.5L797 784.7L796.1 784.7L795.5 787.4L794.9 790.2L794 790.2L794.4 789.4L797.1 790.2L799.9 791L800.3 790.2L799.3 790.2L798.8 792.9L798.2 795.7L797.3 795.7L797.7 794.9L800.4 795.7L803.1 796.5L803.6 795.7L802.6 795.7L802.1 798.4L801.5 801.2L800.6 801.2L801 800.4L803.7 801.2L806.4 802L806.8 801.2L805.9 801.2L805.3 803.9L804.8 806.7L803.8 806.7L804.3 805.9L807 806.7L809.7 807.5L810.1 806.7L809.2 806.6L808.6 809.4L808.1 812.2L807.1 812.2L807.6 811.4L810.3 812.2L813 813L813.4 812.2L812.5 812.1L811.9 814.9L811.3 817.7L810.4 817.7L810.8 816.8L813.6 817.7L816.3 818.5L816.7 817.7L815.8 817.6L815.2 820.4L814.6 823.2L813.7 823.2L814.1 822.3L816.8 823.2L819.5 824L820 823.2L819 823.1L818.5 825.9L817.9 828.7L817 828.7L817.4 827.8L820.1 828.7L822.8 829.5L823.3 828.6L822.3 828.6L821.8 831.4L821.2 834.2L820.3 834.2L820.7 833.3L823.4 834.2L826.1 835L826.5 834.1L825.6 834.1L825 836.9L824.5 839.7L823.5 839.7L824 838.8L826.7 839.6L829.4 840.5L829.8 839.6L828.9 839.6L828.3 842.4L827.8 845.2L826.8 845.2L827.2 844.3L830 845.1L832.7 846L833.1 845.1L832.2 845.1L831.6 847.9L831 850.7L830.1 850.6L830.5 849.8L833.2 850.6L836 851.5L836.4 850.6L835.4 850.6L834.9 853.4L834.3 856.2L833.4 856.1L833.8 855.3L836.5 856.1L839.2 857L839.7 856.1L838.7 856.1L838.2 858.9L837.6 861.7L836.7 861.6L837.1 860.8L839.8 861.6L842.5 862.4L842.9 861.6L842 861.6" stroke="#a8a8a0" stroke-width="0.5" fill="none"/>
<use href="#redl" stroke="#ff0000" stroke-width="1.3" fill="none"/>
<use href="#dots"/>
<use href="#lab" x="533.6" y="114.6"/>
<use href="#lab" x="513.1" y="131.6"/>
<use href="#lab" x="490.6" y="145.1"/>
<use href="#lab" x="468" y="158.6"/>
<use href="#lab" x="445.4" y="172.1"/>
<use href="#lab" x="579.1" y="126.4"/>
<use href="#lab" x="550.8" y="143.4"/>
<use href="#lab" x="530.3" y="160.4"/>
<use href="#lab" x="507.7" y="173.9"/>
<use href="#lab" x="485.2" y="187.3"/>
<use href="#lab" x="462.6" y="200.8"/>
<use href="#lab" x="596.3" y="155.2"/>
<use href="#lab" x="568" y="172.1"/>
<use href="#lab" x="547.5" y="189.1"/>
<use href="#lab" x="524.9" y="202.6"/>
<use href="#lab" x="502.4" y="216.1"/>
<use href="#lab" x="479.8" y="229.6"/>
<use href="#lab" x="613.5" y="184"/>
<use href="#lab" x="585.2" y="200.9"/>
<use href="#lab" x="564.7" y="217.9"/>
<use href="#lab" x="542.1" y="231.4"/>
<use href="#lab" x="519.5" y="244.9"/>
<use href="#lab" x="497" y="258.4"/>
<use href="#lab" x="630.7" y="212.8"/>
<use href="#lab" x="602.4" y="229.7"/>
<use href="#lab" x="581.9" y="246.7"/>
<use href="#lab" x="559.3" y="260.2"/>
<use href="#lab" x="536.7" y="273.7"/>
<use href="#lab" x="514.1" y="287.2"/>
<use href="#lab" x="647.9" y="241.5"/>
<use href="#lab" x="619.6" y="258.5"/>
<use href="#lab" x="599.1" y="275.5"/>
<use href="#lab" x="576.5" y="289"/>
<use href="#lab" x="553.9" y="302.5"/>
<use href="#lab" x="531.3" y="315.9"/>
<use href="#lab" x="665.1" y="270.3"/>
<use href="#lab" x="636.7" y="287.2"/>
<use href="#lab" x="616.3" y="304.3"/>
<use href="#lab" x="593.7" y="317.7"/>
<use href="#lab" x="571.1" y="331.2"/>
<use href="#lab" x="548.5" y="344.7"/>
<use href="#lab" x="682.3" y="299.1"/>
<use href="#lab" x="653.9" y="316"/>
<use href="#lab" x="633.5" y="333"/>
<use href="#lab" x="610.9" y="346.5"/>
<use href="#lab" x="588.3" y="360"/>
<use href="#lab" x="565.7" y="373.5"/>
<use href="#lab" x="699.4" y="327.9"/>
<use href="#lab" x="671.1" y="344.8"/>
<use href="#lab" x="650.6" y="361.8"/>
<use href="#lab" x="628.1" y="375.3"/>
<use href="#lab" x="605.5" y="388.8"/>
<use href="#lab" x="582.9" y="402.3"/>
<use href="#lab" x="716.6" y="356.7"/>
<use href="#lab" x="688.3" y="373.6"/>
<use href="#lab" x="667.8" y="390.6"/>
<use href="#lab" x="645.3" y="404.1"/>
<use href="#lab" x="622.7" y="417.6"/>
<use href="#lab" x="600.1" y="431"/>
<use href="#lab" x="733.8" y="385.4"/>
<use href="#lab" x="705.5" y="402.4"/>
<use href="#lab" x="685" y="419.4"/>
<use href="#lab" x="662.4" y="432.9"/>
<use href="#lab" x="639.9" y="446.3"/>
<use href="#lab" x="617.3" y="459.8"/>
<use href="#lab" x="751" y="414.2"/>
<use href="#lab" x="722.7" y="431.1"/>
<use href="#lab" x="702.2" y="448.1"/>
<use href="#lab" x="679.6" y="461.6"/>
<use href="#lab" x="657" y="475.1"/>
<use href="#lab" x="634.5" y="488.6"/>
<use href="#lab" x="768.2" y="443"/>
<use href="#lab" x="739.9" y="459.9"/>
<use href="#lab" x="719.4" y="476.9"/>
<use href="#lab" x="696.8" y="490.4"/>
<use href="#lab" x="674.2" y="503.9"/>
<use href="#lab" x="651.7" y="517.4"/>
<use href="#lab" x="785.4" y="471.8"/>
<use href="#lab" x="757.1" y="488.7"/>
<use href="#lab" x="736.6" y="505.7"/>
<use href="#lab" x="714" y="519.2"/>
<use href="#lab" x="691.4" y="532.7"/>
<use href="#lab" x="668.8" y="546.2"/>
<use href="#lab" x="802.6" y="500.5"/>
<use href="#lab" x="774.3" y="517.5"/>
<use href="#lab" x="753.8" y="534.5"/>
<use href="#lab" x="731.2" y="548"/>
<use href="#lab" x="708.6" y="561.4"/>
<use href="#lab" x="686" y="574.9"/>
<use href="#lab" x="819.8" y="529.3"/>
<use href="#lab" x="791.4" y="546.2"/>
<use href="#lab" x="771" y="563.3"/>
<use href="#lab" x="748.4" y="576.7"/>
<use href="#lab" x="725.8" y="590.2"/>
<use href="#lab" x="703.2" y="603.7"/>
<use href="#lab" x="837" y="558.1"/>
<use href="#lab" x="808.6" y="575"/>
<use href="#lab" x="788.2" y="592"/>
<use href="#lab" x="765.6" y="605.5"/>
<use href="#lab" x="743" y="619"/>
<use href="#lab" x="854.1" y="586.9"/>
<use href="#lab" x="825.8" y="603.8"/>
<use href="#lab" x="805.3" y="620.8"/>
<use href="#lab" x="871.3" y="615.7"/>
<use href="#lab2" x="433.6" y="101"/>
<use href="#lab2" x="411" y="114.5"/>
<use href="#lab2" x="495.9" y="102.8"/>
<use href="#lab2" x="473.4" y="116.3"/>
<use href="#lab2" x="450.8" y="129.8"/>
<use href="#lab2" x="428.2" y="143.3"/>
<path d="M753.3 109.9L761.9 124.4" stroke="#00ffff" stroke-width="1.2"/>
<use href="#fish" x="753.3" y="109.9"/>
<path d="M770.5 138.7L779.1 153.1" stroke="#00ffff" stroke-width="1.2"/>
<use href="#fish" x="761.9" y="124.4"/>
<use href="#fish" x="770.5" y="138.7"/>
<use href="#fish" x="778" y="124.8"/>
<path d="M787.7 167.5L796.3 181.9" stroke="#00ffff" stroke-width="1.2"/>
<use href="#fish" x="779.1" y="153.1"/>
<use href="#fish" x="787.7" y="167.5"/>
<use href="#fish" x="795.2" y="153.6"/>
<path d="M804.9 196.3L813.5 210.7" stroke="#00ffff" stroke-width="1.2"/>
<use href="#fish" x="796.3" y="181.9"/>
<use href="#fish" x="804.9" y="196.3"/>
<use href="#fish" x="812.4" y="182.3"/>
<path d="M822.1 225L830.7 239.5" stroke="#00ffff" stroke-width="1.2"/>
<use href="#fish" x="813.5" y="210.7"/>
<use href="#fish" x="822.1" y="225"/>
<use href="#fish" x="829.6" y="211.1"/>
<path d="M839.2 253.8L847.9 268.3" stroke="#00ffff" stroke-width="1.2"/>
<use href="#fish" x="830.7" y="239.5"/>
<use href="#fish" x="839.2" y="253.8"/>
<use href="#fish" x="846.8" y="239.9"/>
<path d="M856.4 282.6L865.1 297" stroke="#00ffff" stroke-width="1.2"/>
<use href="#fish" x="847.9" y="268.3"/>
<use href="#fish" x="856.4" y="282.6"/>
<use href="#fish" x="864" y="268.7"/>
<path d="M873.6 311.4L882.3 325.8" stroke="#00ffff" stroke-width="1.2"/>
<use href="#fish" x="865.1" y="297"/>
<use href="#fish" x="873.6" y="311.4"/>
<use href="#fish" x="881.1" y="297.4"/>
<path d="M890.8 340.1L899.4 354.6" stroke="#00ffff" stroke-width="1.2"/>
<use href="#fish" x="882.3" y="325.8"/>
<use href="#fish" x="890.8" y="340.1"/>
<use href="#fish" x="898.3" y="326.2"/>
<path d="M908 368.9L916.6 383.4" stroke="#00ffff" stroke-width="1.2"/>
<use href="#fish" x="899.4" y="354.6"/>
<use href="#fish" x="908" y="368.9"/>
<use href="#fish" x="915.5" y="355"/>
<path d="M925.2 397.7L933.8 412.1" stroke="#00ffff" stroke-width="1.2"/>
<use href="#fish" x="916.6" y="383.4"/>
<use href="#fish" x="925.2" y="397.7"/>
<use href="#fish" x="932.7" y="383.8"/>
<path d="M942.4 426.5L951 440.9" stroke="#00ffff" stroke-width="1.2"/>
<use href="#fish" x="933.8" y="412.1"/>
<use href="#fish" x="942.4" y="426.5"/>
<use href="#fish" x="949.9" y="412.6"/>
<path d="M959.6 455.3L968.2 469.7" stroke="#00ffff" stroke-width="1.2"/>
<use href="#fish" x="951" y="440.9"/>
<use href="#fish" x="959.6" y="455.3"/>
<use href="#fish" x="967.1" y="441.3"/>
<path d="M976.8 484L985.4 498.5" stroke="#00ffff" stroke-width="1.2"/>
<use href="#fish" x="968.2" y="469.7"/>
<use href="#fish" x="976.8" y="484"/>
<use href="#fish" x="984.3" y="470.1"/>
<path d="M993.9 512.8L1002.6 527.3" stroke="#00ffff" stroke-width="1.2"/>
<use href="#fish" x="985.4" y="498.5"/>
<use href="#fish" x="993.9" y="512.8"/>
<use href="#fish" x="1001.5" y="498.9"/>
<path d="M1011.1 541.6L1019.8 556" stroke="#00ffff" stroke-width="1.2"/>
<use href="#fish" x="1002.6" y="527.3"/>
<use href="#fish" x="1011.1" y="541.6"/>
<use href="#fish" x="1018.7" y="527.7"/>
<path d="M1028.3 570.4L1036.9 584.8" stroke="#00ffff" stroke-width="1.2"/>
<use href="#fish" x="1019.8" y="556"/>
<use href="#fish" x="1028.3" y="570.4"/>
<use href="#fish" x="1035.8" y="556.4"/>
<path d="M1045.5 599.1L1054.1 613.6" stroke="#00ffff" stroke-width="1.2"/>
<use href="#fish" x="1036.9" y="584.8"/>
<use href="#fish" x="1045.5" y="599.1"/>
<use href="#fish" x="1053" y="585.2"/>
<path d="M1062.7 627.9L1071.3 642.4" stroke="#00ffff" stroke-width="1.2"/>
<use href="#fish" x="1054.1" y="613.6"/>
<use href="#fish" x="1062.7" y="627.9"/>
<use href="#fish" x="1070.2" y="614"/>
<path d="M751 276 L1098 150 L1137 258 L790.5 384 Z" fill="#00ffff"/>
<g clip-path="url(#cy)"><use href="#gp" stroke="#b8a0a0" stroke-width="1" fill="none" shape-rendering="crispEdges"/><use href="#redl" stroke="#ff0000" stroke-width="1.3" fill="none"/><use href="#dots" opacity="0.85"/></g>
<path d="M751 276 L790.5 384 L1137 258" stroke="#e03030" stroke-width="0.9" fill="none" stroke-dasharray="2 1.5" opacity="0.8"/>
<path d="M751 276 L850 240" stroke="#e03030" stroke-width="0.9" fill="none" stroke-dasharray="2 1.5" opacity="0.8"/>
<path d="M850 240 L1097 149" stroke="#ff0000" stroke-width="1.3" fill="none"/>
<circle cx="994.5" cy="208" r="3.6" fill="#ff2a2a" stroke="#c00000" stroke-width="1.2"/>
<circle cx="1007.5" cy="243" r="3.6" fill="#ff2a2a" stroke="#c00000" stroke-width="1.2"/>
<circle cx="1020.5" cy="279" r="3.6" fill="#ff2a2a" stroke="#c00000" stroke-width="1.2"/>
<path d="M772 318.8 L681.7 374.8 L831.5 622" stroke="#ffff00" stroke-width="1.1" fill="none"/>
<path d="M868.6 259.9 L772 318.8" stroke="#ffff00" stroke-width="1.2" fill="none" stroke-dasharray="2 2.5"/>
<circle cx="745.5" cy="340.8" r="3.2" fill="#86b8f4" stroke="#ff2020" stroke-width="1.5"/>
<g transform="translate(431.2 145) rotate(-30.77)"><rect x="-10.3" y="-16" width="20.6" height="32" rx="2" fill="none" stroke="#ffff00" stroke-width="1.3"/></g>
<circle cx="433.5" cy="151.25" r="3.5" fill="#86b8f4" stroke="#00ff00" stroke-width="2"/>
<g transform="translate(564.4 367.8) rotate(-30.77)"><rect x="-10.3" y="-16" width="20.6" height="32" rx="2" fill="none" stroke="#ffff00" stroke-width="1.3"/></g>
<circle cx="561.8" cy="366.2" r="3.5" fill="#86b8f4" stroke="#00ff00" stroke-width="2"/>
<g transform="translate(703.1 597.9) rotate(-30.77)"><rect x="-10.3" y="-16" width="20.6" height="32" rx="2" fill="none" stroke="#ffff00" stroke-width="1.3"/></g>
<circle cx="699.3" cy="596.5" r="3.5" fill="#86b8f4" stroke="#00ff00" stroke-width="2"/>
<path d="M253.5 611.1 V556.2 H246.5 L264.4 538.4 L282.6 556.2 H275.4 V589.4 H308.6 V582.6 L326.5 600.3 L308.6 618.5 V611.1 Z M275.4 589.4 V611.1 M253.5 589.4 H275.4 M259 549.8 L264.4 555.4 L270.5 549.2 M264.4 555.4 V563.7 M303.3 594.1 L314.5 607.7 M313.5 594.1 L302.2 608" stroke="#fff" stroke-width="1" fill="none" shape-rendering="crispEdges"/>
</svg>

<!-- RIGHT TOOLBAR -->
<div class="a" style="left:1338px;top:75px;width:16px;height:2px;background:repeating-linear-gradient(90deg,#b4b4b4 0 2px,transparent 2px 4px)"></div>
<svg class="a" style="left:1337.0px;top:84.0px" width="18" height="18" viewBox="0 0 18 18"><path d="M2 2V16M16 2V16M2 9H16" stroke="#111" stroke-width="1.6"/><path d="M3 9L6 6.5V11.5ZM15 9L12 6.5V11.5Z" fill="#111"/></svg>
<svg class="a" style="left:1337.0px;top:111.0px" width="18" height="18" viewBox="0 0 18 18"><path d="M3 6 L12 15" stroke="#111" stroke-width="1.6"/><path d="M1 8 L5 4 M10 17 L14 13" stroke="#111" stroke-width="1.6"/><path d="M3 6L4 10L7 9ZM12 15L11 11L8 12Z" fill="#111"/></svg>
<svg class="a" style="left:1337.0px;top:138.0px" width="18" height="18" viewBox="0 0 18 18"><text x="0" y="9" font-size="6" font-family="Liberation Sans" fill="#111">Y</text><text x="0" y="16" font-size="6" font-family="Liberation Sans" fill="#111">0</text><text x="7" y="5" font-size="6" font-family="Liberation Sans" fill="#111">0</text><text x="13" y="5" font-size="6" font-family="Liberation Sans" fill="#111">X</text><path d="M5 11H17M5 14H14M8 6V17M14 7L12 14" stroke="#111" stroke-width="0.9" fill="none"/></svg>
<svg class="a" style="left:1337.0px;top:165.3px" width="18" height="18" viewBox="0 0 18 18"><circle cx="9" cy="9" r="7.5" fill="#eee" stroke="#6a6a5a" stroke-width="1.3"/><path d="M5 5 L10 10" stroke="#111" stroke-width="1.4"/><path d="M4.5 4.5L5 8L8 5Z" fill="#111"/></svg>
<svg class="a" style="left:1337.0px;top:192.5px" width="18" height="18" viewBox="0 0 18 18"><circle cx="9" cy="9" r="7.5" fill="#eee" stroke="#6a6a5a" stroke-width="1.3"/><path d="M5 5 L13 13" stroke="#111" stroke-width="1.4"/><path d="M4.5 4.5L5 8L8 5ZM13.5 13.5L13 10L10 13Z" fill="#111"/></svg>
<svg class="a" style="left:1337.0px;top:219.9px" width="18" height="18" viewBox="0 0 18 18"><path d="M2 16H17M2 16L10 3" stroke="#111" stroke-width="1.4" fill="none"/><path d="M8 6 Q14 9 14 16" fill="none" stroke="#111" stroke-width="1.1"/><path d="M12.5 12L15.5 12L14 15Z" fill="#111"/></svg>
<div class="a" style="left:1338px;top:262px;width:16px;height:2px;background:repeating-linear-gradient(90deg,#b4b4b4 0 2px,transparent 2px 4px)"></div>
<svg class="a" style="left:1337.0px;top:268.6px" width="18" height="18" viewBox="0 0 18 18"><rect x="2" y="3" width="3" height="3" fill="#1a5ad8"/><rect x="13" y="3" width="3" height="3" fill="#1a5ad8"/><path d="M5 4.5H13" stroke="#1a5ad8" stroke-dasharray="2 1.5"/><rect x="1" y="10" width="16" height="5" fill="#e8b428" stroke="#6a4a10" stroke-width="0.6"/><path d="M3 10V12.5M5.5 10V12.5M8 10V12.5M10.5 10V12.5M13 10V12.5M15.5 10V12.5" stroke="#6a4a10" stroke-width="0.6"/></svg>
<svg class="a" style="left:1337.0px;top:291.4px" width="18" height="18" viewBox="0 0 18 18"><path d="M2 2 L15 6 V11 H2Z" fill="#2a5aa8"/><rect x="1" y="11" width="16" height="5" fill="#e8b428" stroke="#6a4a10" stroke-width="0.6"/><path d="M3 11V13.5M5.5 11V13.5M8 11V13.5M10.5 11V13.5M13 11V13.5M15.5 11V13.5" stroke="#6a4a10" stroke-width="0.6"/></svg>
<div class="a" style="left:1338px;top:322px;width:16px;height:2px;background:repeating-linear-gradient(90deg,#b4b4b4 0 2px,transparent 2px 4px)"></div>
<svg class="a" style="left:1337.0px;top:330.7px" width="18" height="18" viewBox="0 0 18 18"><path d="M5 11 L12 3 L16 6 L9 14Z" fill="#f2c640" stroke="#9a7a20" stroke-width="0.6"/><path d="M5 11 L9 14 L7 16 L3 13Z" fill="#e88a8a"/><path d="M1 16.5H17" stroke="#333"/></svg>
<svg class="a" style="left:1337.0px;top:357.7px" width="18" height="18" viewBox="0 0 18 18"><circle cx="6" cy="7" r="4" fill="none" stroke="#222" stroke-width="1.4"/><circle cx="11" cy="12" r="4" fill="#ddd" stroke="#222" stroke-width="1.4"/><path d="M9 2 Q14 2 14 6" fill="none" stroke="#1a5ad8" stroke-width="1.5"/><path d="M12 5 L16 5 L14 8Z" fill="#1a5ad8"/></svg>
<svg class="a" style="left:1337.0px;top:384.6px" width="18" height="18" viewBox="0 0 18 18"><path d="M8 3 L2 15 H8Z" fill="none" stroke="#222" stroke-width="1.3"/><path d="M10 3 L16 15 H10Z" fill="#ddd" stroke="#222" stroke-width="1.3"/><path d="M9 1V18" stroke="#1a5ad8" stroke-width="1.2"/></svg>
<svg class="a" style="left:1337.0px;top:411.6px" width="18" height="18" viewBox="0 0 18 18"><path d="M2 9H16M9 2V16" stroke="#1a5ad8" stroke-width="1.4"/></svg>
<svg class="a" style="left:1337.0px;top:439.7px" width="18" height="18" viewBox="0 0 18 18"><path d="M15 9 A6 6 0 1 1 9 3" fill="none" stroke="#2a6ad0" stroke-width="2"/></svg>
<svg class="a" style="left:1337.0px;top:465.5px" width="18" height="18" viewBox="0 0 18 18"><rect x="3" y="3" width="13" height="13" fill="#dfe8f4" stroke="#1a4a98" stroke-width="1.1"/><rect x="2" y="8" width="8" height="8" fill="none" stroke="#111" stroke-dasharray="1.2 1.2"/></svg>
<svg class="a" style="left:1337.0px;top:492.5px" width="18" height="18" viewBox="0 0 18 18"><path d="M1 9H6" stroke="#111" stroke-width="1.4"/><path d="M8 15 L12 3" stroke="#1a5ad8" stroke-width="1.4"/><path d="M11 9H17" stroke="#1a5ad8" stroke-width="1.2" stroke-dasharray="2 1.5"/></svg>
<svg class="a" style="left:1337.0px;top:521.0px" width="18" height="18" viewBox="0 0 18 18"><path d="M1 9H5" stroke="#111" stroke-width="1.4"/><path d="M6 9H11" stroke="#1a5ad8" stroke-width="1.2" stroke-dasharray="2 1.5"/><path d="M11 15 L15 3" stroke="#1a5ad8" stroke-width="1.4"/></svg>
<svg class="a" style="left:1337.0px;top:547.5px" width="18" height="18" viewBox="0 0 18 18"><circle cx="7" cy="11" r="4" fill="#e8a020"/><path d="M3 15 L13 5" stroke="#d02020" stroke-width="3"/><path d="M13 2V7M11 4H16M15 1L12 6" stroke="#556" stroke-width="0.8"/><circle cx="4" cy="8" r="1.2" fill="#f4d020"/></svg>
<svg class="a" style="left:1322px;top:111px" width="9" height="6"><path d="M1 5 L4.5 1.5 L8 5" fill="none" stroke="#606060" stroke-width="1.6"/></svg>
<svg class="a" style="left:1322px;top:611px" width="9" height="6"><path d="M1 1 L4.5 4.5 L8 1" fill="none" stroke="#606060" stroke-width="1.6"/></svg>
<svg class="a" style="left:248px;top:626px" width="6" height="9"><path d="M5 1 L1.5 4.5 L5 8" fill="none" stroke="#606060" stroke-width="1.6"/></svg>
<svg class="a" style="left:1307px;top:626px" width="6" height="9"><path d="M1 1 L4.5 4.5 L1 8" fill="none" stroke="#606060" stroke-width="1.6"/></svg>
<div class="a" style="left:1320px;top:501px;width:14px;height:60px;background:#cdcdcd"></div>
<div class="a" style="left:758px;top:623px;width:308px;height:15px;background:#cdcdcd"></div>
<svg class="a" style="left:1339px;top:402px" width="27" height="66"><path d="M0.5 0.5 H27 V64 L0.5 42 Z" fill="#f8f8f8" stroke="#cfcfcf"/><path d="M20 10 L11 19.5 L20 29" fill="none" stroke="#3a8ed8" stroke-width="4"/><path d="M12 21 L20 29" stroke="#2a6aa8" stroke-width="2"/></svg>

<!-- FRAME -->
<div class="a" style="left:25px;top:671px;width:1339px;height:2px;background:#7c7c7c"></div>
<div class="a" style="left:1362px;top:69px;width:2px;height:604px;background:#8a8a8a"></div><div class="a" style="left:1365px;top:22px;width:1px;height:38px;background:#cfcfcf"></div>

<!-- STATUS -->
<div class="a" style="left:0;top:673px;width:1366px;height:1px;background:#fdfdfd"></div>
<div class="a" style="left:0;top:682px;width:1366px;height:1px;background:#fff"></div>
<div class="a" style="left:0;top:705px;width:1366px;height:2px;background:#fdfdfd"></div>
<div class="a" style="left:0;top:727px;width:1366px;height:1px;background:#fff"></div>
<div class="gn b" style="left:4.5px;top:687.0px;font-size:15.5px;line-height:16px;letter-spacing:0.1px;transform:scaleX(0.96);transform-origin:0 0">GNSS 1 =&gt;</div>
<div class="gn b" style="left:89.5px;top:687.0px;font-size:15.5px;line-height:16px;color:#0a0aff;transform:scaleX(0.98);transform-origin:0 0">RTK fix</div>
<div class="gn" style="left:151.0px;top:687.0px;font-size:16px;line-height:16px;transform:scaleX(0.915);transform-origin:0 0">SV: 45</div>
<div class="gn" style="left:202.5px;top:687.0px;font-size:16px;line-height:16px;transform:scaleX(0.915);transform-origin:0 0">HDOP: 0.4</div>
<div class="gn" style="left:280.2px;top:687.0px;font-size:16px;line-height:16px;transform:scaleX(0.915);transform-origin:0 0">B: 20°47'30.68575"</div>
<div class="gn" style="left:416.2px;top:687.0px;font-size:16px;line-height:16px;transform:scaleX(0.915);transform-origin:0 0">L: 106°54'45.65795"</div>
<div class="gn" style="left:558.3px;top:687.0px;font-size:16px;line-height:16px;transform:scaleX(0.915);transform-origin:0 0">H: -12.774m</div>
<div class="gn" style="left:649.2px;top:687.0px;font-size:16px;line-height:16px;transform:scaleX(0.915);transform-origin:0 0">N: 2300347.364m</div>
<div class="gn" style="left:775.5px;top:687.0px;font-size:16px;line-height:16px;transform:scaleX(0.915);transform-origin:0 0">E: 0620849.333m</div>
<div class="gn" style="left:899.4px;top:687.0px;font-size:16px;line-height:16px;transform:scaleX(0.915);transform-origin:0 0">hGPS: 8.142m</div>
<div class="gn" style="left:1001.4px;top:687.0px;font-size:16px;line-height:16px;transform:scaleX(0.915);transform-origin:0 0">hTK: 4.742m</div>
<div class="gn b" style="left:4.5px;top:709.5px;font-size:15.5px;line-height:16px;letter-spacing:0.1px;transform:scaleX(0.96);transform-origin:0 0">GNSS 2 =&gt;</div>
<div class="gn b" style="left:89.5px;top:709.5px;font-size:15.5px;line-height:16px;color:#0a0aff;transform:scaleX(0.98);transform-origin:0 0">RTK fix</div>
<div class="gn" style="left:151.0px;top:709.5px;font-size:16px;line-height:16px;transform:scaleX(0.915);transform-origin:0 0">SV: 44</div>
<div class="gn" style="left:202.5px;top:709.5px;font-size:16px;line-height:16px;transform:scaleX(0.915);transform-origin:0 0">HDOP: 0.4</div>
<div class="gn" style="left:280.2px;top:709.5px;font-size:16px;line-height:16px;transform:scaleX(0.915);transform-origin:0 0">B: 20°47'31.03720"</div>
<div class="gn" style="left:416.2px;top:709.5px;font-size:16px;line-height:16px;transform:scaleX(0.915);transform-origin:0 0">L: 106°54'45.52248"</div>
<div class="gn" style="left:558.3px;top:709.5px;font-size:16px;line-height:16px;transform:scaleX(0.915);transform-origin:0 0">H: -12.739m</div>
<div class="gn" style="left:649.2px;top:709.5px;font-size:16px;line-height:16px;transform:scaleX(0.915);transform-origin:0 0">N: 2300358.145m</div>
<div class="gn" style="left:775.5px;top:709.5px;font-size:16px;line-height:16px;transform:scaleX(0.915);transform-origin:0 0">E: 0620845.337m</div>
<div class="gn" style="left:899.4px;top:709.5px;font-size:16px;line-height:16px;transform:scaleX(0.915);transform-origin:0 0">hGPS: 8.177m</div>
<div class="gn" style="left:1001.4px;top:709.5px;font-size:16px;line-height:16px;transform:scaleX(0.915);transform-origin:0 0">hTK: 8.177m</div>
<svg class="a" style="left:1354px;top:683px" width="10" height="20"><g fill="#c8c8c8"><rect x="7" y="8" width="2" height="2"/><rect x="4" y="11" width="2" height="2"/><rect x="7" y="11" width="2" height="2"/><rect x="1" y="14" width="2" height="2"/><rect x="4" y="14" width="2" height="2"/><rect x="7" y="14" width="2" height="2"/></g></svg>
<svg class="a" style="left:1354px;top:706px" width="10" height="20"><g fill="#c8c8c8"><rect x="7" y="8" width="2" height="2"/><rect x="4" y="11" width="2" height="2"/><rect x="7" y="11" width="2" height="2"/><rect x="1" y="14" width="2" height="2"/><rect x="4" y="14" width="2" height="2"/><rect x="7" y="14" width="2" height="2"/></g></svg>

<!-- TASKBAR -->
<div class="a" style="left:0;top:728px;width:1366px;height:40px;background:#1c2128"></div>
<svg class="a" style="left:16px;top:740px" width="16" height="16"><g fill="#fff"><path d="M0 2.2 L6.6 1.3 V7.5 H0Z"/><path d="M7.4 1.2 L16 0 V7.5 H7.4Z"/><path d="M0 8.3 H6.6 V14.6 L0 13.7Z"/><path d="M7.4 8.3 H16 V16 L7.4 14.8Z"/></g></svg>
<svg class="a" style="left:63px;top:739px" width="18" height="18"><circle cx="11" cy="7" r="5.5" fill="none" stroke="#fff" stroke-width="1.4"/><path d="M7 11 L1 17" stroke="#fff" stroke-width="1.6"/></svg>
<div class="a" style="left:101px;top:739px;width:1px;height:18px;background:#777"></div><div class="a" style="left:104px;top:739px;width:1px;height:18px;background:#555"></div>
<svg class="a" style="left:132px;top:737px" width="22" height="20"><path d="M0 2 H8 L10 4 H22 V19 H0Z" fill="#e8b830"/><rect x="0" y="6" width="22" height="13" fill="#f8d45c"/><path d="M6 11 H16 V18 H13 V14 H9 V18 H6Z" fill="#2a8ad8"/></svg>
<svg class="a" style="left:176px;top:735px" width="30" height="24"><ellipse cx="15" cy="21" rx="5" ry="2.5" fill="#c87830"/><ellipse cx="15" cy="11" rx="13" ry="4" fill="#8a5a30"/><circle cx="15" cy="10" r="7" fill="#a9a9a0"/><circle cx="13" cy="8" r="3" fill="#ddd"/></svg>
<svg class="a" style="left:229px;top:736px" width="24" height="22"><rect x="9" y="2" width="14" height="18" fill="#fff" stroke="#2b5797"/><g stroke="#2b5797" stroke-width="1.2"><path d="M12 6H21M12 9H21M12 12H21M12 15H21"/></g><path d="M0 3 L13 1 V21 L0 19Z" fill="#2b579a"/><text x="2" y="15" font-size="9" font-weight="bold" fill="#fff" font-family="Liberation Sans">W</text></svg>
<svg class="a" style="left:278px;top:735px" width="25" height="25"><circle cx="12.5" cy="12.5" r="12" fill="#fff"/><path d="M12.5 1 A11.5 11.5 0 1 0 12.5 24 A11.5 11.5 0 1 0 12.5 1Z" fill="#1a80e6"/><rect x="3.5" y="5" width="18" height="14" rx="6" fill="#fff"/><text x="5" y="15.5" font-size="7.5" font-weight="bold" fill="#1a80e6" font-family="Liberation Sans">Zalo</text></svg>
<svg class="a" style="left:327px;top:735px" width="24" height="24"><circle cx="12" cy="12" r="12" fill="#2f80d1"/><rect x="6" y="7" width="12" height="8" fill="none" stroke="#fff" stroke-width="1.5"/><path d="M9 18H15M12 15V18" stroke="#fff" stroke-width="1.4"/><path d="M7 14 L17 8 V14Z" fill="#fff"/></svg>
<div class="a" style="left:123px;top:766px;width:40px;height:2px;background:#9fd4f0"></div>
<div class="a" style="left:172px;top:766px;width:40px;height:2px;background:#9fd4f0"></div>
<div class="a" style="left:221px;top:766px;width:40px;height:2px;background:#9fd4f0"></div>
<div class="a" style="left:270px;top:766px;width:40px;height:2px;background:#9fd4f0"></div>
<div class="a" style="left:319px;top:766px;width:40px;height:2px;background:#9fd4f0"></div>
<div class="a" style="left:801px;top:736px;width:52px;height:23px;background:#000;border:1.5px solid #f0f0f0"></div>
<div class="a" style="left:855px;top:742px;width:3px;height:12px;background:#000;border:1.5px solid #f0f0f0;border-left:none"></div>
<div class="t" style="left:817px;top:740px;font-size:13.5px;color:#fff">A/C</div>
<svg class="a" style="left:935px;top:739px" width="26" height="18"><path d="M5 17 H21 A5 5 0 0 0 21 7 A7 7 0 0 0 8 6 A5.5 5.5 0 0 0 5 17Z" fill="#b8cff0"/><path d="M5 17 H21 A5 5 0 0 0 24 13 H2 A5 5 0 0 0 5 17Z" fill="#8aaee0"/></svg>
<div class="t" style="left:968px;top:740px;font-size:13.5px;color:#f2f2f2">27°C</div>
<div class="t" style="left:1006px;top:740px;font-size:13.5px;color:#f2f2f2">Có mây</div>
<svg class="a" style="left:1069px;top:742px" width="14" height="9"><path d="M1 8 L7 2 L13 8" fill="none" stroke="#eee" stroke-width="1.3"/></svg>
<svg class="a" style="left:1093px;top:740px" width="13" height="16"><rect x="1" y="4" width="8" height="8" rx="2" fill="none" stroke="#ddd" stroke-width="1.2"/><path d="M9 6 L12 4 V12 L9 10" fill="none" stroke="#ddd" stroke-width="1.2"/><path d="M2 1H8M2 15H8" stroke="#aaa"/></svg>
<svg class="a" style="left:1114px;top:739px" width="17" height="17"><rect x="0.5" y="0.5" width="16" height="16" fill="#f4d8d8" stroke="#bbb"/><path d="M3 3 L8.5 14 L14 3" fill="none" stroke="#d01010" stroke-width="2.2"/></svg>
<svg class="a" style="left:1138px;top:741px" width="17" height="13"><path d="M2 1V4M5 1V4M1 4H6V7H1Z M3.5 7V10" stroke="#eee" fill="none" stroke-width="1.2"/><rect x="5" y="3" width="10" height="8" fill="none" stroke="#eee" stroke-width="1.3"/><rect x="7" y="5" width="7" height="4" fill="#eee"/><rect x="15" y="5" width="1.5" height="4" fill="#eee"/></svg>
<svg class="a" style="left:1162px;top:740px" width="17" height="16"><path d="M1 5H4L8 1V15L4 11H1Z" fill="none" stroke="#eee" stroke-width="1.2"/><path d="M10.5 5 Q12.5 8 10.5 11 M12.5 3 Q16 8 12.5 13" fill="none" stroke="#eee" stroke-width="1.2"/></svg>
<svg class="a" style="left:1189px;top:740px" width="16" height="16"><path d="M1 15 A14 14 0 0 1 15 1 M4.5 15 A10.5 10.5 0 0 1 15 4.5 M8 15 A7 7 0 0 1 15 8" fill="none" stroke="#eee" stroke-width="1.2"/><circle cx="13" cy="13" r="2" fill="#eee"/></svg>
<div class="t" style="left:1213px;top:741px;font-size:11.5px;color:#f2f2f2">ENG</div>
<div class="t" style="left:1257.5px;top:732px;font-size:11.7px;color:#f2f2f2">2:20 PM</div>
<div class="t" style="left:1250px;top:750px;font-size:11.6px;color:#f2f2f2">14/04/2023</div>
<div class="a" style="left:1313px;top:728px;width:42px;height:40px;background:#23282f"></div>
<svg class="a" style="left:1324px;top:739px" width="17" height="17"><path d="M0.7 0.7H16.3V12.3H10L8.5 15.5L7 12.3H0.7Z" fill="none" stroke="#f0f0f0" stroke-width="1.3"/></svg>
<div class="a" style="left:1361px;top:728px;width:1px;height:40px;background:#555"></div>
</body></html>
